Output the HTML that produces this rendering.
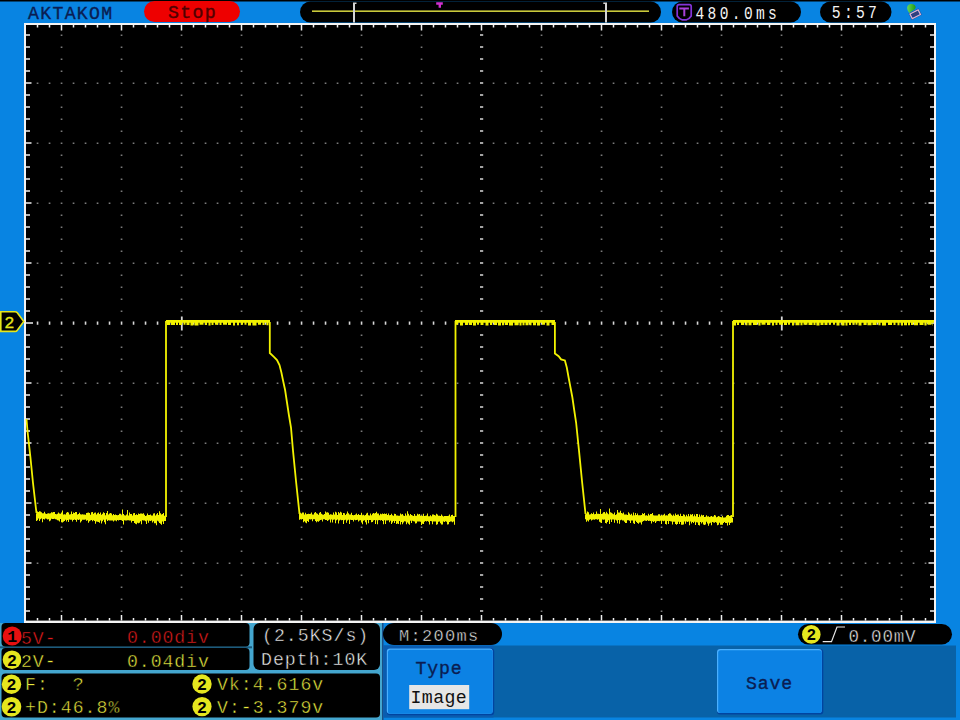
<!DOCTYPE html>
<html><head><meta charset="utf-8"><style>
html,body{margin:0;padding:0;width:960px;height:720px;overflow:hidden;background:#0884e2}
svg{display:block}
text{font-family:"Liberation Mono",monospace}
</style></head><body>
<svg width="960" height="720" viewBox="0 0 960 720">
<rect x="0" y="0" width="960" height="720" fill="#0884e2"/>
<rect x="0" y="0" width="960" height="1.5" fill="#000"/>
<rect x="24" y="23" width="912" height="600.4" fill="#f4f4f4"/>
<rect x="26" y="25" width="908" height="595.6" fill="#000"/>
<path d="M60.70 34.40h1.7v1.6h-1.7zM60.70 46.40h1.7v1.6h-1.7zM60.70 58.40h1.7v1.6h-1.7zM60.70 70.40h1.7v1.6h-1.7zM60.70 82.40h1.7v1.6h-1.7zM60.70 94.40h1.7v1.6h-1.7zM60.70 106.40h1.7v1.6h-1.7zM60.70 118.40h1.7v1.6h-1.7zM60.70 130.40h1.7v1.6h-1.7zM60.70 142.40h1.7v1.6h-1.7zM60.70 154.40h1.7v1.6h-1.7zM60.70 166.40h1.7v1.6h-1.7zM60.70 178.40h1.7v1.6h-1.7zM60.70 190.40h1.7v1.6h-1.7zM60.70 202.40h1.7v1.6h-1.7zM60.70 214.40h1.7v1.6h-1.7zM60.70 226.40h1.7v1.6h-1.7zM60.70 238.40h1.7v1.6h-1.7zM60.70 250.40h1.7v1.6h-1.7zM60.70 262.40h1.7v1.6h-1.7zM60.70 274.40h1.7v1.6h-1.7zM60.70 286.40h1.7v1.6h-1.7zM60.70 298.40h1.7v1.6h-1.7zM60.70 310.40h1.7v1.6h-1.7zM60.70 334.40h1.7v1.6h-1.7zM60.70 346.40h1.7v1.6h-1.7zM60.70 358.40h1.7v1.6h-1.7zM60.70 370.40h1.7v1.6h-1.7zM60.70 382.40h1.7v1.6h-1.7zM60.70 394.40h1.7v1.6h-1.7zM60.70 406.40h1.7v1.6h-1.7zM60.70 418.40h1.7v1.6h-1.7zM60.70 430.40h1.7v1.6h-1.7zM60.70 442.40h1.7v1.6h-1.7zM60.70 454.40h1.7v1.6h-1.7zM60.70 466.40h1.7v1.6h-1.7zM60.70 478.40h1.7v1.6h-1.7zM60.70 490.40h1.7v1.6h-1.7zM60.70 502.40h1.7v1.6h-1.7zM60.70 514.40h1.7v1.6h-1.7zM60.70 526.40h1.7v1.6h-1.7zM60.70 538.40h1.7v1.6h-1.7zM60.70 550.40h1.7v1.6h-1.7zM60.70 562.40h1.7v1.6h-1.7zM60.70 574.40h1.7v1.6h-1.7zM60.70 586.40h1.7v1.6h-1.7zM60.70 598.40h1.7v1.6h-1.7zM60.70 610.40h1.7v1.6h-1.7zM120.70 34.40h1.7v1.6h-1.7zM120.70 46.40h1.7v1.6h-1.7zM120.70 58.40h1.7v1.6h-1.7zM120.70 70.40h1.7v1.6h-1.7zM120.70 82.40h1.7v1.6h-1.7zM120.70 94.40h1.7v1.6h-1.7zM120.70 106.40h1.7v1.6h-1.7zM120.70 118.40h1.7v1.6h-1.7zM120.70 130.40h1.7v1.6h-1.7zM120.70 142.40h1.7v1.6h-1.7zM120.70 154.40h1.7v1.6h-1.7zM120.70 166.40h1.7v1.6h-1.7zM120.70 178.40h1.7v1.6h-1.7zM120.70 190.40h1.7v1.6h-1.7zM120.70 202.40h1.7v1.6h-1.7zM120.70 214.40h1.7v1.6h-1.7zM120.70 226.40h1.7v1.6h-1.7zM120.70 238.40h1.7v1.6h-1.7zM120.70 250.40h1.7v1.6h-1.7zM120.70 262.40h1.7v1.6h-1.7zM120.70 274.40h1.7v1.6h-1.7zM120.70 286.40h1.7v1.6h-1.7zM120.70 298.40h1.7v1.6h-1.7zM120.70 310.40h1.7v1.6h-1.7zM120.70 334.40h1.7v1.6h-1.7zM120.70 346.40h1.7v1.6h-1.7zM120.70 358.40h1.7v1.6h-1.7zM120.70 370.40h1.7v1.6h-1.7zM120.70 382.40h1.7v1.6h-1.7zM120.70 394.40h1.7v1.6h-1.7zM120.70 406.40h1.7v1.6h-1.7zM120.70 418.40h1.7v1.6h-1.7zM120.70 430.40h1.7v1.6h-1.7zM120.70 442.40h1.7v1.6h-1.7zM120.70 454.40h1.7v1.6h-1.7zM120.70 466.40h1.7v1.6h-1.7zM120.70 478.40h1.7v1.6h-1.7zM120.70 490.40h1.7v1.6h-1.7zM120.70 502.40h1.7v1.6h-1.7zM120.70 514.40h1.7v1.6h-1.7zM120.70 526.40h1.7v1.6h-1.7zM120.70 538.40h1.7v1.6h-1.7zM120.70 550.40h1.7v1.6h-1.7zM120.70 562.40h1.7v1.6h-1.7zM120.70 574.40h1.7v1.6h-1.7zM120.70 586.40h1.7v1.6h-1.7zM120.70 598.40h1.7v1.6h-1.7zM120.70 610.40h1.7v1.6h-1.7zM180.70 34.40h1.7v1.6h-1.7zM180.70 46.40h1.7v1.6h-1.7zM180.70 58.40h1.7v1.6h-1.7zM180.70 70.40h1.7v1.6h-1.7zM180.70 82.40h1.7v1.6h-1.7zM180.70 94.40h1.7v1.6h-1.7zM180.70 106.40h1.7v1.6h-1.7zM180.70 118.40h1.7v1.6h-1.7zM180.70 130.40h1.7v1.6h-1.7zM180.70 142.40h1.7v1.6h-1.7zM180.70 154.40h1.7v1.6h-1.7zM180.70 166.40h1.7v1.6h-1.7zM180.70 178.40h1.7v1.6h-1.7zM180.70 190.40h1.7v1.6h-1.7zM180.70 202.40h1.7v1.6h-1.7zM180.70 214.40h1.7v1.6h-1.7zM180.70 226.40h1.7v1.6h-1.7zM180.70 238.40h1.7v1.6h-1.7zM180.70 250.40h1.7v1.6h-1.7zM180.70 262.40h1.7v1.6h-1.7zM180.70 274.40h1.7v1.6h-1.7zM180.70 286.40h1.7v1.6h-1.7zM180.70 298.40h1.7v1.6h-1.7zM180.70 310.40h1.7v1.6h-1.7zM180.70 334.40h1.7v1.6h-1.7zM180.70 346.40h1.7v1.6h-1.7zM180.70 358.40h1.7v1.6h-1.7zM180.70 370.40h1.7v1.6h-1.7zM180.70 382.40h1.7v1.6h-1.7zM180.70 394.40h1.7v1.6h-1.7zM180.70 406.40h1.7v1.6h-1.7zM180.70 418.40h1.7v1.6h-1.7zM180.70 430.40h1.7v1.6h-1.7zM180.70 442.40h1.7v1.6h-1.7zM180.70 454.40h1.7v1.6h-1.7zM180.70 466.40h1.7v1.6h-1.7zM180.70 478.40h1.7v1.6h-1.7zM180.70 490.40h1.7v1.6h-1.7zM180.70 502.40h1.7v1.6h-1.7zM180.70 514.40h1.7v1.6h-1.7zM180.70 526.40h1.7v1.6h-1.7zM180.70 538.40h1.7v1.6h-1.7zM180.70 550.40h1.7v1.6h-1.7zM180.70 562.40h1.7v1.6h-1.7zM180.70 574.40h1.7v1.6h-1.7zM180.70 586.40h1.7v1.6h-1.7zM180.70 598.40h1.7v1.6h-1.7zM180.70 610.40h1.7v1.6h-1.7zM240.70 34.40h1.7v1.6h-1.7zM240.70 46.40h1.7v1.6h-1.7zM240.70 58.40h1.7v1.6h-1.7zM240.70 70.40h1.7v1.6h-1.7zM240.70 82.40h1.7v1.6h-1.7zM240.70 94.40h1.7v1.6h-1.7zM240.70 106.40h1.7v1.6h-1.7zM240.70 118.40h1.7v1.6h-1.7zM240.70 130.40h1.7v1.6h-1.7zM240.70 142.40h1.7v1.6h-1.7zM240.70 154.40h1.7v1.6h-1.7zM240.70 166.40h1.7v1.6h-1.7zM240.70 178.40h1.7v1.6h-1.7zM240.70 190.40h1.7v1.6h-1.7zM240.70 202.40h1.7v1.6h-1.7zM240.70 214.40h1.7v1.6h-1.7zM240.70 226.40h1.7v1.6h-1.7zM240.70 238.40h1.7v1.6h-1.7zM240.70 250.40h1.7v1.6h-1.7zM240.70 262.40h1.7v1.6h-1.7zM240.70 274.40h1.7v1.6h-1.7zM240.70 286.40h1.7v1.6h-1.7zM240.70 298.40h1.7v1.6h-1.7zM240.70 310.40h1.7v1.6h-1.7zM240.70 334.40h1.7v1.6h-1.7zM240.70 346.40h1.7v1.6h-1.7zM240.70 358.40h1.7v1.6h-1.7zM240.70 370.40h1.7v1.6h-1.7zM240.70 382.40h1.7v1.6h-1.7zM240.70 394.40h1.7v1.6h-1.7zM240.70 406.40h1.7v1.6h-1.7zM240.70 418.40h1.7v1.6h-1.7zM240.70 430.40h1.7v1.6h-1.7zM240.70 442.40h1.7v1.6h-1.7zM240.70 454.40h1.7v1.6h-1.7zM240.70 466.40h1.7v1.6h-1.7zM240.70 478.40h1.7v1.6h-1.7zM240.70 490.40h1.7v1.6h-1.7zM240.70 502.40h1.7v1.6h-1.7zM240.70 514.40h1.7v1.6h-1.7zM240.70 526.40h1.7v1.6h-1.7zM240.70 538.40h1.7v1.6h-1.7zM240.70 550.40h1.7v1.6h-1.7zM240.70 562.40h1.7v1.6h-1.7zM240.70 574.40h1.7v1.6h-1.7zM240.70 586.40h1.7v1.6h-1.7zM240.70 598.40h1.7v1.6h-1.7zM240.70 610.40h1.7v1.6h-1.7zM300.70 34.40h1.7v1.6h-1.7zM300.70 46.40h1.7v1.6h-1.7zM300.70 58.40h1.7v1.6h-1.7zM300.70 70.40h1.7v1.6h-1.7zM300.70 82.40h1.7v1.6h-1.7zM300.70 94.40h1.7v1.6h-1.7zM300.70 106.40h1.7v1.6h-1.7zM300.70 118.40h1.7v1.6h-1.7zM300.70 130.40h1.7v1.6h-1.7zM300.70 142.40h1.7v1.6h-1.7zM300.70 154.40h1.7v1.6h-1.7zM300.70 166.40h1.7v1.6h-1.7zM300.70 178.40h1.7v1.6h-1.7zM300.70 190.40h1.7v1.6h-1.7zM300.70 202.40h1.7v1.6h-1.7zM300.70 214.40h1.7v1.6h-1.7zM300.70 226.40h1.7v1.6h-1.7zM300.70 238.40h1.7v1.6h-1.7zM300.70 250.40h1.7v1.6h-1.7zM300.70 262.40h1.7v1.6h-1.7zM300.70 274.40h1.7v1.6h-1.7zM300.70 286.40h1.7v1.6h-1.7zM300.70 298.40h1.7v1.6h-1.7zM300.70 310.40h1.7v1.6h-1.7zM300.70 334.40h1.7v1.6h-1.7zM300.70 346.40h1.7v1.6h-1.7zM300.70 358.40h1.7v1.6h-1.7zM300.70 370.40h1.7v1.6h-1.7zM300.70 382.40h1.7v1.6h-1.7zM300.70 394.40h1.7v1.6h-1.7zM300.70 406.40h1.7v1.6h-1.7zM300.70 418.40h1.7v1.6h-1.7zM300.70 430.40h1.7v1.6h-1.7zM300.70 442.40h1.7v1.6h-1.7zM300.70 454.40h1.7v1.6h-1.7zM300.70 466.40h1.7v1.6h-1.7zM300.70 478.40h1.7v1.6h-1.7zM300.70 490.40h1.7v1.6h-1.7zM300.70 502.40h1.7v1.6h-1.7zM300.70 514.40h1.7v1.6h-1.7zM300.70 526.40h1.7v1.6h-1.7zM300.70 538.40h1.7v1.6h-1.7zM300.70 550.40h1.7v1.6h-1.7zM300.70 562.40h1.7v1.6h-1.7zM300.70 574.40h1.7v1.6h-1.7zM300.70 586.40h1.7v1.6h-1.7zM300.70 598.40h1.7v1.6h-1.7zM300.70 610.40h1.7v1.6h-1.7zM360.70 34.40h1.7v1.6h-1.7zM360.70 46.40h1.7v1.6h-1.7zM360.70 58.40h1.7v1.6h-1.7zM360.70 70.40h1.7v1.6h-1.7zM360.70 82.40h1.7v1.6h-1.7zM360.70 94.40h1.7v1.6h-1.7zM360.70 106.40h1.7v1.6h-1.7zM360.70 118.40h1.7v1.6h-1.7zM360.70 130.40h1.7v1.6h-1.7zM360.70 142.40h1.7v1.6h-1.7zM360.70 154.40h1.7v1.6h-1.7zM360.70 166.40h1.7v1.6h-1.7zM360.70 178.40h1.7v1.6h-1.7zM360.70 190.40h1.7v1.6h-1.7zM360.70 202.40h1.7v1.6h-1.7zM360.70 214.40h1.7v1.6h-1.7zM360.70 226.40h1.7v1.6h-1.7zM360.70 238.40h1.7v1.6h-1.7zM360.70 250.40h1.7v1.6h-1.7zM360.70 262.40h1.7v1.6h-1.7zM360.70 274.40h1.7v1.6h-1.7zM360.70 286.40h1.7v1.6h-1.7zM360.70 298.40h1.7v1.6h-1.7zM360.70 310.40h1.7v1.6h-1.7zM360.70 334.40h1.7v1.6h-1.7zM360.70 346.40h1.7v1.6h-1.7zM360.70 358.40h1.7v1.6h-1.7zM360.70 370.40h1.7v1.6h-1.7zM360.70 382.40h1.7v1.6h-1.7zM360.70 394.40h1.7v1.6h-1.7zM360.70 406.40h1.7v1.6h-1.7zM360.70 418.40h1.7v1.6h-1.7zM360.70 430.40h1.7v1.6h-1.7zM360.70 442.40h1.7v1.6h-1.7zM360.70 454.40h1.7v1.6h-1.7zM360.70 466.40h1.7v1.6h-1.7zM360.70 478.40h1.7v1.6h-1.7zM360.70 490.40h1.7v1.6h-1.7zM360.70 502.40h1.7v1.6h-1.7zM360.70 514.40h1.7v1.6h-1.7zM360.70 526.40h1.7v1.6h-1.7zM360.70 538.40h1.7v1.6h-1.7zM360.70 550.40h1.7v1.6h-1.7zM360.70 562.40h1.7v1.6h-1.7zM360.70 574.40h1.7v1.6h-1.7zM360.70 586.40h1.7v1.6h-1.7zM360.70 598.40h1.7v1.6h-1.7zM360.70 610.40h1.7v1.6h-1.7zM420.70 34.40h1.7v1.6h-1.7zM420.70 46.40h1.7v1.6h-1.7zM420.70 58.40h1.7v1.6h-1.7zM420.70 70.40h1.7v1.6h-1.7zM420.70 82.40h1.7v1.6h-1.7zM420.70 94.40h1.7v1.6h-1.7zM420.70 106.40h1.7v1.6h-1.7zM420.70 118.40h1.7v1.6h-1.7zM420.70 130.40h1.7v1.6h-1.7zM420.70 142.40h1.7v1.6h-1.7zM420.70 154.40h1.7v1.6h-1.7zM420.70 166.40h1.7v1.6h-1.7zM420.70 178.40h1.7v1.6h-1.7zM420.70 190.40h1.7v1.6h-1.7zM420.70 202.40h1.7v1.6h-1.7zM420.70 214.40h1.7v1.6h-1.7zM420.70 226.40h1.7v1.6h-1.7zM420.70 238.40h1.7v1.6h-1.7zM420.70 250.40h1.7v1.6h-1.7zM420.70 262.40h1.7v1.6h-1.7zM420.70 274.40h1.7v1.6h-1.7zM420.70 286.40h1.7v1.6h-1.7zM420.70 298.40h1.7v1.6h-1.7zM420.70 310.40h1.7v1.6h-1.7zM420.70 334.40h1.7v1.6h-1.7zM420.70 346.40h1.7v1.6h-1.7zM420.70 358.40h1.7v1.6h-1.7zM420.70 370.40h1.7v1.6h-1.7zM420.70 382.40h1.7v1.6h-1.7zM420.70 394.40h1.7v1.6h-1.7zM420.70 406.40h1.7v1.6h-1.7zM420.70 418.40h1.7v1.6h-1.7zM420.70 430.40h1.7v1.6h-1.7zM420.70 442.40h1.7v1.6h-1.7zM420.70 454.40h1.7v1.6h-1.7zM420.70 466.40h1.7v1.6h-1.7zM420.70 478.40h1.7v1.6h-1.7zM420.70 490.40h1.7v1.6h-1.7zM420.70 502.40h1.7v1.6h-1.7zM420.70 514.40h1.7v1.6h-1.7zM420.70 526.40h1.7v1.6h-1.7zM420.70 538.40h1.7v1.6h-1.7zM420.70 550.40h1.7v1.6h-1.7zM420.70 562.40h1.7v1.6h-1.7zM420.70 574.40h1.7v1.6h-1.7zM420.70 586.40h1.7v1.6h-1.7zM420.70 598.40h1.7v1.6h-1.7zM420.70 610.40h1.7v1.6h-1.7zM540.70 34.40h1.7v1.6h-1.7zM540.70 46.40h1.7v1.6h-1.7zM540.70 58.40h1.7v1.6h-1.7zM540.70 70.40h1.7v1.6h-1.7zM540.70 82.40h1.7v1.6h-1.7zM540.70 94.40h1.7v1.6h-1.7zM540.70 106.40h1.7v1.6h-1.7zM540.70 118.40h1.7v1.6h-1.7zM540.70 130.40h1.7v1.6h-1.7zM540.70 142.40h1.7v1.6h-1.7zM540.70 154.40h1.7v1.6h-1.7zM540.70 166.40h1.7v1.6h-1.7zM540.70 178.40h1.7v1.6h-1.7zM540.70 190.40h1.7v1.6h-1.7zM540.70 202.40h1.7v1.6h-1.7zM540.70 214.40h1.7v1.6h-1.7zM540.70 226.40h1.7v1.6h-1.7zM540.70 238.40h1.7v1.6h-1.7zM540.70 250.40h1.7v1.6h-1.7zM540.70 262.40h1.7v1.6h-1.7zM540.70 274.40h1.7v1.6h-1.7zM540.70 286.40h1.7v1.6h-1.7zM540.70 298.40h1.7v1.6h-1.7zM540.70 310.40h1.7v1.6h-1.7zM540.70 334.40h1.7v1.6h-1.7zM540.70 346.40h1.7v1.6h-1.7zM540.70 358.40h1.7v1.6h-1.7zM540.70 370.40h1.7v1.6h-1.7zM540.70 382.40h1.7v1.6h-1.7zM540.70 394.40h1.7v1.6h-1.7zM540.70 406.40h1.7v1.6h-1.7zM540.70 418.40h1.7v1.6h-1.7zM540.70 430.40h1.7v1.6h-1.7zM540.70 442.40h1.7v1.6h-1.7zM540.70 454.40h1.7v1.6h-1.7zM540.70 466.40h1.7v1.6h-1.7zM540.70 478.40h1.7v1.6h-1.7zM540.70 490.40h1.7v1.6h-1.7zM540.70 502.40h1.7v1.6h-1.7zM540.70 514.40h1.7v1.6h-1.7zM540.70 526.40h1.7v1.6h-1.7zM540.70 538.40h1.7v1.6h-1.7zM540.70 550.40h1.7v1.6h-1.7zM540.70 562.40h1.7v1.6h-1.7zM540.70 574.40h1.7v1.6h-1.7zM540.70 586.40h1.7v1.6h-1.7zM540.70 598.40h1.7v1.6h-1.7zM540.70 610.40h1.7v1.6h-1.7zM600.70 34.40h1.7v1.6h-1.7zM600.70 46.40h1.7v1.6h-1.7zM600.70 58.40h1.7v1.6h-1.7zM600.70 70.40h1.7v1.6h-1.7zM600.70 82.40h1.7v1.6h-1.7zM600.70 94.40h1.7v1.6h-1.7zM600.70 106.40h1.7v1.6h-1.7zM600.70 118.40h1.7v1.6h-1.7zM600.70 130.40h1.7v1.6h-1.7zM600.70 142.40h1.7v1.6h-1.7zM600.70 154.40h1.7v1.6h-1.7zM600.70 166.40h1.7v1.6h-1.7zM600.70 178.40h1.7v1.6h-1.7zM600.70 190.40h1.7v1.6h-1.7zM600.70 202.40h1.7v1.6h-1.7zM600.70 214.40h1.7v1.6h-1.7zM600.70 226.40h1.7v1.6h-1.7zM600.70 238.40h1.7v1.6h-1.7zM600.70 250.40h1.7v1.6h-1.7zM600.70 262.40h1.7v1.6h-1.7zM600.70 274.40h1.7v1.6h-1.7zM600.70 286.40h1.7v1.6h-1.7zM600.70 298.40h1.7v1.6h-1.7zM600.70 310.40h1.7v1.6h-1.7zM600.70 334.40h1.7v1.6h-1.7zM600.70 346.40h1.7v1.6h-1.7zM600.70 358.40h1.7v1.6h-1.7zM600.70 370.40h1.7v1.6h-1.7zM600.70 382.40h1.7v1.6h-1.7zM600.70 394.40h1.7v1.6h-1.7zM600.70 406.40h1.7v1.6h-1.7zM600.70 418.40h1.7v1.6h-1.7zM600.70 430.40h1.7v1.6h-1.7zM600.70 442.40h1.7v1.6h-1.7zM600.70 454.40h1.7v1.6h-1.7zM600.70 466.40h1.7v1.6h-1.7zM600.70 478.40h1.7v1.6h-1.7zM600.70 490.40h1.7v1.6h-1.7zM600.70 502.40h1.7v1.6h-1.7zM600.70 514.40h1.7v1.6h-1.7zM600.70 526.40h1.7v1.6h-1.7zM600.70 538.40h1.7v1.6h-1.7zM600.70 550.40h1.7v1.6h-1.7zM600.70 562.40h1.7v1.6h-1.7zM600.70 574.40h1.7v1.6h-1.7zM600.70 586.40h1.7v1.6h-1.7zM600.70 598.40h1.7v1.6h-1.7zM600.70 610.40h1.7v1.6h-1.7zM660.70 34.40h1.7v1.6h-1.7zM660.70 46.40h1.7v1.6h-1.7zM660.70 58.40h1.7v1.6h-1.7zM660.70 70.40h1.7v1.6h-1.7zM660.70 82.40h1.7v1.6h-1.7zM660.70 94.40h1.7v1.6h-1.7zM660.70 106.40h1.7v1.6h-1.7zM660.70 118.40h1.7v1.6h-1.7zM660.70 130.40h1.7v1.6h-1.7zM660.70 142.40h1.7v1.6h-1.7zM660.70 154.40h1.7v1.6h-1.7zM660.70 166.40h1.7v1.6h-1.7zM660.70 178.40h1.7v1.6h-1.7zM660.70 190.40h1.7v1.6h-1.7zM660.70 202.40h1.7v1.6h-1.7zM660.70 214.40h1.7v1.6h-1.7zM660.70 226.40h1.7v1.6h-1.7zM660.70 238.40h1.7v1.6h-1.7zM660.70 250.40h1.7v1.6h-1.7zM660.70 262.40h1.7v1.6h-1.7zM660.70 274.40h1.7v1.6h-1.7zM660.70 286.40h1.7v1.6h-1.7zM660.70 298.40h1.7v1.6h-1.7zM660.70 310.40h1.7v1.6h-1.7zM660.70 334.40h1.7v1.6h-1.7zM660.70 346.40h1.7v1.6h-1.7zM660.70 358.40h1.7v1.6h-1.7zM660.70 370.40h1.7v1.6h-1.7zM660.70 382.40h1.7v1.6h-1.7zM660.70 394.40h1.7v1.6h-1.7zM660.70 406.40h1.7v1.6h-1.7zM660.70 418.40h1.7v1.6h-1.7zM660.70 430.40h1.7v1.6h-1.7zM660.70 442.40h1.7v1.6h-1.7zM660.70 454.40h1.7v1.6h-1.7zM660.70 466.40h1.7v1.6h-1.7zM660.70 478.40h1.7v1.6h-1.7zM660.70 490.40h1.7v1.6h-1.7zM660.70 502.40h1.7v1.6h-1.7zM660.70 514.40h1.7v1.6h-1.7zM660.70 526.40h1.7v1.6h-1.7zM660.70 538.40h1.7v1.6h-1.7zM660.70 550.40h1.7v1.6h-1.7zM660.70 562.40h1.7v1.6h-1.7zM660.70 574.40h1.7v1.6h-1.7zM660.70 586.40h1.7v1.6h-1.7zM660.70 598.40h1.7v1.6h-1.7zM660.70 610.40h1.7v1.6h-1.7zM720.70 34.40h1.7v1.6h-1.7zM720.70 46.40h1.7v1.6h-1.7zM720.70 58.40h1.7v1.6h-1.7zM720.70 70.40h1.7v1.6h-1.7zM720.70 82.40h1.7v1.6h-1.7zM720.70 94.40h1.7v1.6h-1.7zM720.70 106.40h1.7v1.6h-1.7zM720.70 118.40h1.7v1.6h-1.7zM720.70 130.40h1.7v1.6h-1.7zM720.70 142.40h1.7v1.6h-1.7zM720.70 154.40h1.7v1.6h-1.7zM720.70 166.40h1.7v1.6h-1.7zM720.70 178.40h1.7v1.6h-1.7zM720.70 190.40h1.7v1.6h-1.7zM720.70 202.40h1.7v1.6h-1.7zM720.70 214.40h1.7v1.6h-1.7zM720.70 226.40h1.7v1.6h-1.7zM720.70 238.40h1.7v1.6h-1.7zM720.70 250.40h1.7v1.6h-1.7zM720.70 262.40h1.7v1.6h-1.7zM720.70 274.40h1.7v1.6h-1.7zM720.70 286.40h1.7v1.6h-1.7zM720.70 298.40h1.7v1.6h-1.7zM720.70 310.40h1.7v1.6h-1.7zM720.70 334.40h1.7v1.6h-1.7zM720.70 346.40h1.7v1.6h-1.7zM720.70 358.40h1.7v1.6h-1.7zM720.70 370.40h1.7v1.6h-1.7zM720.70 382.40h1.7v1.6h-1.7zM720.70 394.40h1.7v1.6h-1.7zM720.70 406.40h1.7v1.6h-1.7zM720.70 418.40h1.7v1.6h-1.7zM720.70 430.40h1.7v1.6h-1.7zM720.70 442.40h1.7v1.6h-1.7zM720.70 454.40h1.7v1.6h-1.7zM720.70 466.40h1.7v1.6h-1.7zM720.70 478.40h1.7v1.6h-1.7zM720.70 490.40h1.7v1.6h-1.7zM720.70 502.40h1.7v1.6h-1.7zM720.70 514.40h1.7v1.6h-1.7zM720.70 526.40h1.7v1.6h-1.7zM720.70 538.40h1.7v1.6h-1.7zM720.70 550.40h1.7v1.6h-1.7zM720.70 562.40h1.7v1.6h-1.7zM720.70 574.40h1.7v1.6h-1.7zM720.70 586.40h1.7v1.6h-1.7zM720.70 598.40h1.7v1.6h-1.7zM720.70 610.40h1.7v1.6h-1.7zM780.70 34.40h1.7v1.6h-1.7zM780.70 46.40h1.7v1.6h-1.7zM780.70 58.40h1.7v1.6h-1.7zM780.70 70.40h1.7v1.6h-1.7zM780.70 82.40h1.7v1.6h-1.7zM780.70 94.40h1.7v1.6h-1.7zM780.70 106.40h1.7v1.6h-1.7zM780.70 118.40h1.7v1.6h-1.7zM780.70 130.40h1.7v1.6h-1.7zM780.70 142.40h1.7v1.6h-1.7zM780.70 154.40h1.7v1.6h-1.7zM780.70 166.40h1.7v1.6h-1.7zM780.70 178.40h1.7v1.6h-1.7zM780.70 190.40h1.7v1.6h-1.7zM780.70 202.40h1.7v1.6h-1.7zM780.70 214.40h1.7v1.6h-1.7zM780.70 226.40h1.7v1.6h-1.7zM780.70 238.40h1.7v1.6h-1.7zM780.70 250.40h1.7v1.6h-1.7zM780.70 262.40h1.7v1.6h-1.7zM780.70 274.40h1.7v1.6h-1.7zM780.70 286.40h1.7v1.6h-1.7zM780.70 298.40h1.7v1.6h-1.7zM780.70 310.40h1.7v1.6h-1.7zM780.70 334.40h1.7v1.6h-1.7zM780.70 346.40h1.7v1.6h-1.7zM780.70 358.40h1.7v1.6h-1.7zM780.70 370.40h1.7v1.6h-1.7zM780.70 382.40h1.7v1.6h-1.7zM780.70 394.40h1.7v1.6h-1.7zM780.70 406.40h1.7v1.6h-1.7zM780.70 418.40h1.7v1.6h-1.7zM780.70 430.40h1.7v1.6h-1.7zM780.70 442.40h1.7v1.6h-1.7zM780.70 454.40h1.7v1.6h-1.7zM780.70 466.40h1.7v1.6h-1.7zM780.70 478.40h1.7v1.6h-1.7zM780.70 490.40h1.7v1.6h-1.7zM780.70 502.40h1.7v1.6h-1.7zM780.70 514.40h1.7v1.6h-1.7zM780.70 526.40h1.7v1.6h-1.7zM780.70 538.40h1.7v1.6h-1.7zM780.70 550.40h1.7v1.6h-1.7zM780.70 562.40h1.7v1.6h-1.7zM780.70 574.40h1.7v1.6h-1.7zM780.70 586.40h1.7v1.6h-1.7zM780.70 598.40h1.7v1.6h-1.7zM780.70 610.40h1.7v1.6h-1.7zM840.70 34.40h1.7v1.6h-1.7zM840.70 46.40h1.7v1.6h-1.7zM840.70 58.40h1.7v1.6h-1.7zM840.70 70.40h1.7v1.6h-1.7zM840.70 82.40h1.7v1.6h-1.7zM840.70 94.40h1.7v1.6h-1.7zM840.70 106.40h1.7v1.6h-1.7zM840.70 118.40h1.7v1.6h-1.7zM840.70 130.40h1.7v1.6h-1.7zM840.70 142.40h1.7v1.6h-1.7zM840.70 154.40h1.7v1.6h-1.7zM840.70 166.40h1.7v1.6h-1.7zM840.70 178.40h1.7v1.6h-1.7zM840.70 190.40h1.7v1.6h-1.7zM840.70 202.40h1.7v1.6h-1.7zM840.70 214.40h1.7v1.6h-1.7zM840.70 226.40h1.7v1.6h-1.7zM840.70 238.40h1.7v1.6h-1.7zM840.70 250.40h1.7v1.6h-1.7zM840.70 262.40h1.7v1.6h-1.7zM840.70 274.40h1.7v1.6h-1.7zM840.70 286.40h1.7v1.6h-1.7zM840.70 298.40h1.7v1.6h-1.7zM840.70 310.40h1.7v1.6h-1.7zM840.70 334.40h1.7v1.6h-1.7zM840.70 346.40h1.7v1.6h-1.7zM840.70 358.40h1.7v1.6h-1.7zM840.70 370.40h1.7v1.6h-1.7zM840.70 382.40h1.7v1.6h-1.7zM840.70 394.40h1.7v1.6h-1.7zM840.70 406.40h1.7v1.6h-1.7zM840.70 418.40h1.7v1.6h-1.7zM840.70 430.40h1.7v1.6h-1.7zM840.70 442.40h1.7v1.6h-1.7zM840.70 454.40h1.7v1.6h-1.7zM840.70 466.40h1.7v1.6h-1.7zM840.70 478.40h1.7v1.6h-1.7zM840.70 490.40h1.7v1.6h-1.7zM840.70 502.40h1.7v1.6h-1.7zM840.70 514.40h1.7v1.6h-1.7zM840.70 526.40h1.7v1.6h-1.7zM840.70 538.40h1.7v1.6h-1.7zM840.70 550.40h1.7v1.6h-1.7zM840.70 562.40h1.7v1.6h-1.7zM840.70 574.40h1.7v1.6h-1.7zM840.70 586.40h1.7v1.6h-1.7zM840.70 598.40h1.7v1.6h-1.7zM840.70 610.40h1.7v1.6h-1.7zM900.70 34.40h1.7v1.6h-1.7zM900.70 46.40h1.7v1.6h-1.7zM900.70 58.40h1.7v1.6h-1.7zM900.70 70.40h1.7v1.6h-1.7zM900.70 82.40h1.7v1.6h-1.7zM900.70 94.40h1.7v1.6h-1.7zM900.70 106.40h1.7v1.6h-1.7zM900.70 118.40h1.7v1.6h-1.7zM900.70 130.40h1.7v1.6h-1.7zM900.70 142.40h1.7v1.6h-1.7zM900.70 154.40h1.7v1.6h-1.7zM900.70 166.40h1.7v1.6h-1.7zM900.70 178.40h1.7v1.6h-1.7zM900.70 190.40h1.7v1.6h-1.7zM900.70 202.40h1.7v1.6h-1.7zM900.70 214.40h1.7v1.6h-1.7zM900.70 226.40h1.7v1.6h-1.7zM900.70 238.40h1.7v1.6h-1.7zM900.70 250.40h1.7v1.6h-1.7zM900.70 262.40h1.7v1.6h-1.7zM900.70 274.40h1.7v1.6h-1.7zM900.70 286.40h1.7v1.6h-1.7zM900.70 298.40h1.7v1.6h-1.7zM900.70 310.40h1.7v1.6h-1.7zM900.70 334.40h1.7v1.6h-1.7zM900.70 346.40h1.7v1.6h-1.7zM900.70 358.40h1.7v1.6h-1.7zM900.70 370.40h1.7v1.6h-1.7zM900.70 382.40h1.7v1.6h-1.7zM900.70 394.40h1.7v1.6h-1.7zM900.70 406.40h1.7v1.6h-1.7zM900.70 418.40h1.7v1.6h-1.7zM900.70 430.40h1.7v1.6h-1.7zM900.70 442.40h1.7v1.6h-1.7zM900.70 454.40h1.7v1.6h-1.7zM900.70 466.40h1.7v1.6h-1.7zM900.70 478.40h1.7v1.6h-1.7zM900.70 490.40h1.7v1.6h-1.7zM900.70 502.40h1.7v1.6h-1.7zM900.70 514.40h1.7v1.6h-1.7zM900.70 526.40h1.7v1.6h-1.7zM900.70 538.40h1.7v1.6h-1.7zM900.70 550.40h1.7v1.6h-1.7zM900.70 562.40h1.7v1.6h-1.7zM900.70 574.40h1.7v1.6h-1.7zM900.70 586.40h1.7v1.6h-1.7zM900.70 598.40h1.7v1.6h-1.7zM900.70 610.40h1.7v1.6h-1.7zM36.70 82.40h1.7v1.6h-1.7zM48.70 82.40h1.7v1.6h-1.7zM72.70 82.40h1.7v1.6h-1.7zM84.70 82.40h1.7v1.6h-1.7zM96.70 82.40h1.7v1.6h-1.7zM108.70 82.40h1.7v1.6h-1.7zM132.70 82.40h1.7v1.6h-1.7zM144.70 82.40h1.7v1.6h-1.7zM156.70 82.40h1.7v1.6h-1.7zM168.70 82.40h1.7v1.6h-1.7zM192.70 82.40h1.7v1.6h-1.7zM204.70 82.40h1.7v1.6h-1.7zM216.70 82.40h1.7v1.6h-1.7zM228.70 82.40h1.7v1.6h-1.7zM252.70 82.40h1.7v1.6h-1.7zM264.70 82.40h1.7v1.6h-1.7zM276.70 82.40h1.7v1.6h-1.7zM288.70 82.40h1.7v1.6h-1.7zM312.70 82.40h1.7v1.6h-1.7zM324.70 82.40h1.7v1.6h-1.7zM336.70 82.40h1.7v1.6h-1.7zM348.70 82.40h1.7v1.6h-1.7zM372.70 82.40h1.7v1.6h-1.7zM384.70 82.40h1.7v1.6h-1.7zM396.70 82.40h1.7v1.6h-1.7zM408.70 82.40h1.7v1.6h-1.7zM432.70 82.40h1.7v1.6h-1.7zM444.70 82.40h1.7v1.6h-1.7zM456.70 82.40h1.7v1.6h-1.7zM468.70 82.40h1.7v1.6h-1.7zM492.70 82.40h1.7v1.6h-1.7zM504.70 82.40h1.7v1.6h-1.7zM516.70 82.40h1.7v1.6h-1.7zM528.70 82.40h1.7v1.6h-1.7zM552.70 82.40h1.7v1.6h-1.7zM564.70 82.40h1.7v1.6h-1.7zM576.70 82.40h1.7v1.6h-1.7zM588.70 82.40h1.7v1.6h-1.7zM612.70 82.40h1.7v1.6h-1.7zM624.70 82.40h1.7v1.6h-1.7zM636.70 82.40h1.7v1.6h-1.7zM648.70 82.40h1.7v1.6h-1.7zM672.70 82.40h1.7v1.6h-1.7zM684.70 82.40h1.7v1.6h-1.7zM696.70 82.40h1.7v1.6h-1.7zM708.70 82.40h1.7v1.6h-1.7zM732.70 82.40h1.7v1.6h-1.7zM744.70 82.40h1.7v1.6h-1.7zM756.70 82.40h1.7v1.6h-1.7zM768.70 82.40h1.7v1.6h-1.7zM792.70 82.40h1.7v1.6h-1.7zM804.70 82.40h1.7v1.6h-1.7zM816.70 82.40h1.7v1.6h-1.7zM828.70 82.40h1.7v1.6h-1.7zM852.70 82.40h1.7v1.6h-1.7zM864.70 82.40h1.7v1.6h-1.7zM876.70 82.40h1.7v1.6h-1.7zM888.70 82.40h1.7v1.6h-1.7zM912.70 82.40h1.7v1.6h-1.7zM924.70 82.40h1.7v1.6h-1.7zM36.70 142.40h1.7v1.6h-1.7zM48.70 142.40h1.7v1.6h-1.7zM72.70 142.40h1.7v1.6h-1.7zM84.70 142.40h1.7v1.6h-1.7zM96.70 142.40h1.7v1.6h-1.7zM108.70 142.40h1.7v1.6h-1.7zM132.70 142.40h1.7v1.6h-1.7zM144.70 142.40h1.7v1.6h-1.7zM156.70 142.40h1.7v1.6h-1.7zM168.70 142.40h1.7v1.6h-1.7zM192.70 142.40h1.7v1.6h-1.7zM204.70 142.40h1.7v1.6h-1.7zM216.70 142.40h1.7v1.6h-1.7zM228.70 142.40h1.7v1.6h-1.7zM252.70 142.40h1.7v1.6h-1.7zM264.70 142.40h1.7v1.6h-1.7zM276.70 142.40h1.7v1.6h-1.7zM288.70 142.40h1.7v1.6h-1.7zM312.70 142.40h1.7v1.6h-1.7zM324.70 142.40h1.7v1.6h-1.7zM336.70 142.40h1.7v1.6h-1.7zM348.70 142.40h1.7v1.6h-1.7zM372.70 142.40h1.7v1.6h-1.7zM384.70 142.40h1.7v1.6h-1.7zM396.70 142.40h1.7v1.6h-1.7zM408.70 142.40h1.7v1.6h-1.7zM432.70 142.40h1.7v1.6h-1.7zM444.70 142.40h1.7v1.6h-1.7zM456.70 142.40h1.7v1.6h-1.7zM468.70 142.40h1.7v1.6h-1.7zM492.70 142.40h1.7v1.6h-1.7zM504.70 142.40h1.7v1.6h-1.7zM516.70 142.40h1.7v1.6h-1.7zM528.70 142.40h1.7v1.6h-1.7zM552.70 142.40h1.7v1.6h-1.7zM564.70 142.40h1.7v1.6h-1.7zM576.70 142.40h1.7v1.6h-1.7zM588.70 142.40h1.7v1.6h-1.7zM612.70 142.40h1.7v1.6h-1.7zM624.70 142.40h1.7v1.6h-1.7zM636.70 142.40h1.7v1.6h-1.7zM648.70 142.40h1.7v1.6h-1.7zM672.70 142.40h1.7v1.6h-1.7zM684.70 142.40h1.7v1.6h-1.7zM696.70 142.40h1.7v1.6h-1.7zM708.70 142.40h1.7v1.6h-1.7zM732.70 142.40h1.7v1.6h-1.7zM744.70 142.40h1.7v1.6h-1.7zM756.70 142.40h1.7v1.6h-1.7zM768.70 142.40h1.7v1.6h-1.7zM792.70 142.40h1.7v1.6h-1.7zM804.70 142.40h1.7v1.6h-1.7zM816.70 142.40h1.7v1.6h-1.7zM828.70 142.40h1.7v1.6h-1.7zM852.70 142.40h1.7v1.6h-1.7zM864.70 142.40h1.7v1.6h-1.7zM876.70 142.40h1.7v1.6h-1.7zM888.70 142.40h1.7v1.6h-1.7zM912.70 142.40h1.7v1.6h-1.7zM924.70 142.40h1.7v1.6h-1.7zM36.70 202.40h1.7v1.6h-1.7zM48.70 202.40h1.7v1.6h-1.7zM72.70 202.40h1.7v1.6h-1.7zM84.70 202.40h1.7v1.6h-1.7zM96.70 202.40h1.7v1.6h-1.7zM108.70 202.40h1.7v1.6h-1.7zM132.70 202.40h1.7v1.6h-1.7zM144.70 202.40h1.7v1.6h-1.7zM156.70 202.40h1.7v1.6h-1.7zM168.70 202.40h1.7v1.6h-1.7zM192.70 202.40h1.7v1.6h-1.7zM204.70 202.40h1.7v1.6h-1.7zM216.70 202.40h1.7v1.6h-1.7zM228.70 202.40h1.7v1.6h-1.7zM252.70 202.40h1.7v1.6h-1.7zM264.70 202.40h1.7v1.6h-1.7zM276.70 202.40h1.7v1.6h-1.7zM288.70 202.40h1.7v1.6h-1.7zM312.70 202.40h1.7v1.6h-1.7zM324.70 202.40h1.7v1.6h-1.7zM336.70 202.40h1.7v1.6h-1.7zM348.70 202.40h1.7v1.6h-1.7zM372.70 202.40h1.7v1.6h-1.7zM384.70 202.40h1.7v1.6h-1.7zM396.70 202.40h1.7v1.6h-1.7zM408.70 202.40h1.7v1.6h-1.7zM432.70 202.40h1.7v1.6h-1.7zM444.70 202.40h1.7v1.6h-1.7zM456.70 202.40h1.7v1.6h-1.7zM468.70 202.40h1.7v1.6h-1.7zM492.70 202.40h1.7v1.6h-1.7zM504.70 202.40h1.7v1.6h-1.7zM516.70 202.40h1.7v1.6h-1.7zM528.70 202.40h1.7v1.6h-1.7zM552.70 202.40h1.7v1.6h-1.7zM564.70 202.40h1.7v1.6h-1.7zM576.70 202.40h1.7v1.6h-1.7zM588.70 202.40h1.7v1.6h-1.7zM612.70 202.40h1.7v1.6h-1.7zM624.70 202.40h1.7v1.6h-1.7zM636.70 202.40h1.7v1.6h-1.7zM648.70 202.40h1.7v1.6h-1.7zM672.70 202.40h1.7v1.6h-1.7zM684.70 202.40h1.7v1.6h-1.7zM696.70 202.40h1.7v1.6h-1.7zM708.70 202.40h1.7v1.6h-1.7zM732.70 202.40h1.7v1.6h-1.7zM744.70 202.40h1.7v1.6h-1.7zM756.70 202.40h1.7v1.6h-1.7zM768.70 202.40h1.7v1.6h-1.7zM792.70 202.40h1.7v1.6h-1.7zM804.70 202.40h1.7v1.6h-1.7zM816.70 202.40h1.7v1.6h-1.7zM828.70 202.40h1.7v1.6h-1.7zM852.70 202.40h1.7v1.6h-1.7zM864.70 202.40h1.7v1.6h-1.7zM876.70 202.40h1.7v1.6h-1.7zM888.70 202.40h1.7v1.6h-1.7zM912.70 202.40h1.7v1.6h-1.7zM924.70 202.40h1.7v1.6h-1.7zM36.70 262.40h1.7v1.6h-1.7zM48.70 262.40h1.7v1.6h-1.7zM72.70 262.40h1.7v1.6h-1.7zM84.70 262.40h1.7v1.6h-1.7zM96.70 262.40h1.7v1.6h-1.7zM108.70 262.40h1.7v1.6h-1.7zM132.70 262.40h1.7v1.6h-1.7zM144.70 262.40h1.7v1.6h-1.7zM156.70 262.40h1.7v1.6h-1.7zM168.70 262.40h1.7v1.6h-1.7zM192.70 262.40h1.7v1.6h-1.7zM204.70 262.40h1.7v1.6h-1.7zM216.70 262.40h1.7v1.6h-1.7zM228.70 262.40h1.7v1.6h-1.7zM252.70 262.40h1.7v1.6h-1.7zM264.70 262.40h1.7v1.6h-1.7zM276.70 262.40h1.7v1.6h-1.7zM288.70 262.40h1.7v1.6h-1.7zM312.70 262.40h1.7v1.6h-1.7zM324.70 262.40h1.7v1.6h-1.7zM336.70 262.40h1.7v1.6h-1.7zM348.70 262.40h1.7v1.6h-1.7zM372.70 262.40h1.7v1.6h-1.7zM384.70 262.40h1.7v1.6h-1.7zM396.70 262.40h1.7v1.6h-1.7zM408.70 262.40h1.7v1.6h-1.7zM432.70 262.40h1.7v1.6h-1.7zM444.70 262.40h1.7v1.6h-1.7zM456.70 262.40h1.7v1.6h-1.7zM468.70 262.40h1.7v1.6h-1.7zM492.70 262.40h1.7v1.6h-1.7zM504.70 262.40h1.7v1.6h-1.7zM516.70 262.40h1.7v1.6h-1.7zM528.70 262.40h1.7v1.6h-1.7zM552.70 262.40h1.7v1.6h-1.7zM564.70 262.40h1.7v1.6h-1.7zM576.70 262.40h1.7v1.6h-1.7zM588.70 262.40h1.7v1.6h-1.7zM612.70 262.40h1.7v1.6h-1.7zM624.70 262.40h1.7v1.6h-1.7zM636.70 262.40h1.7v1.6h-1.7zM648.70 262.40h1.7v1.6h-1.7zM672.70 262.40h1.7v1.6h-1.7zM684.70 262.40h1.7v1.6h-1.7zM696.70 262.40h1.7v1.6h-1.7zM708.70 262.40h1.7v1.6h-1.7zM732.70 262.40h1.7v1.6h-1.7zM744.70 262.40h1.7v1.6h-1.7zM756.70 262.40h1.7v1.6h-1.7zM768.70 262.40h1.7v1.6h-1.7zM792.70 262.40h1.7v1.6h-1.7zM804.70 262.40h1.7v1.6h-1.7zM816.70 262.40h1.7v1.6h-1.7zM828.70 262.40h1.7v1.6h-1.7zM852.70 262.40h1.7v1.6h-1.7zM864.70 262.40h1.7v1.6h-1.7zM876.70 262.40h1.7v1.6h-1.7zM888.70 262.40h1.7v1.6h-1.7zM912.70 262.40h1.7v1.6h-1.7zM924.70 262.40h1.7v1.6h-1.7zM36.70 382.40h1.7v1.6h-1.7zM48.70 382.40h1.7v1.6h-1.7zM72.70 382.40h1.7v1.6h-1.7zM84.70 382.40h1.7v1.6h-1.7zM96.70 382.40h1.7v1.6h-1.7zM108.70 382.40h1.7v1.6h-1.7zM132.70 382.40h1.7v1.6h-1.7zM144.70 382.40h1.7v1.6h-1.7zM156.70 382.40h1.7v1.6h-1.7zM168.70 382.40h1.7v1.6h-1.7zM192.70 382.40h1.7v1.6h-1.7zM204.70 382.40h1.7v1.6h-1.7zM216.70 382.40h1.7v1.6h-1.7zM228.70 382.40h1.7v1.6h-1.7zM252.70 382.40h1.7v1.6h-1.7zM264.70 382.40h1.7v1.6h-1.7zM276.70 382.40h1.7v1.6h-1.7zM288.70 382.40h1.7v1.6h-1.7zM312.70 382.40h1.7v1.6h-1.7zM324.70 382.40h1.7v1.6h-1.7zM336.70 382.40h1.7v1.6h-1.7zM348.70 382.40h1.7v1.6h-1.7zM372.70 382.40h1.7v1.6h-1.7zM384.70 382.40h1.7v1.6h-1.7zM396.70 382.40h1.7v1.6h-1.7zM408.70 382.40h1.7v1.6h-1.7zM432.70 382.40h1.7v1.6h-1.7zM444.70 382.40h1.7v1.6h-1.7zM456.70 382.40h1.7v1.6h-1.7zM468.70 382.40h1.7v1.6h-1.7zM492.70 382.40h1.7v1.6h-1.7zM504.70 382.40h1.7v1.6h-1.7zM516.70 382.40h1.7v1.6h-1.7zM528.70 382.40h1.7v1.6h-1.7zM552.70 382.40h1.7v1.6h-1.7zM564.70 382.40h1.7v1.6h-1.7zM576.70 382.40h1.7v1.6h-1.7zM588.70 382.40h1.7v1.6h-1.7zM612.70 382.40h1.7v1.6h-1.7zM624.70 382.40h1.7v1.6h-1.7zM636.70 382.40h1.7v1.6h-1.7zM648.70 382.40h1.7v1.6h-1.7zM672.70 382.40h1.7v1.6h-1.7zM684.70 382.40h1.7v1.6h-1.7zM696.70 382.40h1.7v1.6h-1.7zM708.70 382.40h1.7v1.6h-1.7zM732.70 382.40h1.7v1.6h-1.7zM744.70 382.40h1.7v1.6h-1.7zM756.70 382.40h1.7v1.6h-1.7zM768.70 382.40h1.7v1.6h-1.7zM792.70 382.40h1.7v1.6h-1.7zM804.70 382.40h1.7v1.6h-1.7zM816.70 382.40h1.7v1.6h-1.7zM828.70 382.40h1.7v1.6h-1.7zM852.70 382.40h1.7v1.6h-1.7zM864.70 382.40h1.7v1.6h-1.7zM876.70 382.40h1.7v1.6h-1.7zM888.70 382.40h1.7v1.6h-1.7zM912.70 382.40h1.7v1.6h-1.7zM924.70 382.40h1.7v1.6h-1.7zM36.70 442.40h1.7v1.6h-1.7zM48.70 442.40h1.7v1.6h-1.7zM72.70 442.40h1.7v1.6h-1.7zM84.70 442.40h1.7v1.6h-1.7zM96.70 442.40h1.7v1.6h-1.7zM108.70 442.40h1.7v1.6h-1.7zM132.70 442.40h1.7v1.6h-1.7zM144.70 442.40h1.7v1.6h-1.7zM156.70 442.40h1.7v1.6h-1.7zM168.70 442.40h1.7v1.6h-1.7zM192.70 442.40h1.7v1.6h-1.7zM204.70 442.40h1.7v1.6h-1.7zM216.70 442.40h1.7v1.6h-1.7zM228.70 442.40h1.7v1.6h-1.7zM252.70 442.40h1.7v1.6h-1.7zM264.70 442.40h1.7v1.6h-1.7zM276.70 442.40h1.7v1.6h-1.7zM288.70 442.40h1.7v1.6h-1.7zM312.70 442.40h1.7v1.6h-1.7zM324.70 442.40h1.7v1.6h-1.7zM336.70 442.40h1.7v1.6h-1.7zM348.70 442.40h1.7v1.6h-1.7zM372.70 442.40h1.7v1.6h-1.7zM384.70 442.40h1.7v1.6h-1.7zM396.70 442.40h1.7v1.6h-1.7zM408.70 442.40h1.7v1.6h-1.7zM432.70 442.40h1.7v1.6h-1.7zM444.70 442.40h1.7v1.6h-1.7zM456.70 442.40h1.7v1.6h-1.7zM468.70 442.40h1.7v1.6h-1.7zM492.70 442.40h1.7v1.6h-1.7zM504.70 442.40h1.7v1.6h-1.7zM516.70 442.40h1.7v1.6h-1.7zM528.70 442.40h1.7v1.6h-1.7zM552.70 442.40h1.7v1.6h-1.7zM564.70 442.40h1.7v1.6h-1.7zM576.70 442.40h1.7v1.6h-1.7zM588.70 442.40h1.7v1.6h-1.7zM612.70 442.40h1.7v1.6h-1.7zM624.70 442.40h1.7v1.6h-1.7zM636.70 442.40h1.7v1.6h-1.7zM648.70 442.40h1.7v1.6h-1.7zM672.70 442.40h1.7v1.6h-1.7zM684.70 442.40h1.7v1.6h-1.7zM696.70 442.40h1.7v1.6h-1.7zM708.70 442.40h1.7v1.6h-1.7zM732.70 442.40h1.7v1.6h-1.7zM744.70 442.40h1.7v1.6h-1.7zM756.70 442.40h1.7v1.6h-1.7zM768.70 442.40h1.7v1.6h-1.7zM792.70 442.40h1.7v1.6h-1.7zM804.70 442.40h1.7v1.6h-1.7zM816.70 442.40h1.7v1.6h-1.7zM828.70 442.40h1.7v1.6h-1.7zM852.70 442.40h1.7v1.6h-1.7zM864.70 442.40h1.7v1.6h-1.7zM876.70 442.40h1.7v1.6h-1.7zM888.70 442.40h1.7v1.6h-1.7zM912.70 442.40h1.7v1.6h-1.7zM924.70 442.40h1.7v1.6h-1.7zM36.70 502.40h1.7v1.6h-1.7zM48.70 502.40h1.7v1.6h-1.7zM72.70 502.40h1.7v1.6h-1.7zM84.70 502.40h1.7v1.6h-1.7zM96.70 502.40h1.7v1.6h-1.7zM108.70 502.40h1.7v1.6h-1.7zM132.70 502.40h1.7v1.6h-1.7zM144.70 502.40h1.7v1.6h-1.7zM156.70 502.40h1.7v1.6h-1.7zM168.70 502.40h1.7v1.6h-1.7zM192.70 502.40h1.7v1.6h-1.7zM204.70 502.40h1.7v1.6h-1.7zM216.70 502.40h1.7v1.6h-1.7zM228.70 502.40h1.7v1.6h-1.7zM252.70 502.40h1.7v1.6h-1.7zM264.70 502.40h1.7v1.6h-1.7zM276.70 502.40h1.7v1.6h-1.7zM288.70 502.40h1.7v1.6h-1.7zM312.70 502.40h1.7v1.6h-1.7zM324.70 502.40h1.7v1.6h-1.7zM336.70 502.40h1.7v1.6h-1.7zM348.70 502.40h1.7v1.6h-1.7zM372.70 502.40h1.7v1.6h-1.7zM384.70 502.40h1.7v1.6h-1.7zM396.70 502.40h1.7v1.6h-1.7zM408.70 502.40h1.7v1.6h-1.7zM432.70 502.40h1.7v1.6h-1.7zM444.70 502.40h1.7v1.6h-1.7zM456.70 502.40h1.7v1.6h-1.7zM468.70 502.40h1.7v1.6h-1.7zM492.70 502.40h1.7v1.6h-1.7zM504.70 502.40h1.7v1.6h-1.7zM516.70 502.40h1.7v1.6h-1.7zM528.70 502.40h1.7v1.6h-1.7zM552.70 502.40h1.7v1.6h-1.7zM564.70 502.40h1.7v1.6h-1.7zM576.70 502.40h1.7v1.6h-1.7zM588.70 502.40h1.7v1.6h-1.7zM612.70 502.40h1.7v1.6h-1.7zM624.70 502.40h1.7v1.6h-1.7zM636.70 502.40h1.7v1.6h-1.7zM648.70 502.40h1.7v1.6h-1.7zM672.70 502.40h1.7v1.6h-1.7zM684.70 502.40h1.7v1.6h-1.7zM696.70 502.40h1.7v1.6h-1.7zM708.70 502.40h1.7v1.6h-1.7zM732.70 502.40h1.7v1.6h-1.7zM744.70 502.40h1.7v1.6h-1.7zM756.70 502.40h1.7v1.6h-1.7zM768.70 502.40h1.7v1.6h-1.7zM792.70 502.40h1.7v1.6h-1.7zM804.70 502.40h1.7v1.6h-1.7zM816.70 502.40h1.7v1.6h-1.7zM828.70 502.40h1.7v1.6h-1.7zM852.70 502.40h1.7v1.6h-1.7zM864.70 502.40h1.7v1.6h-1.7zM876.70 502.40h1.7v1.6h-1.7zM888.70 502.40h1.7v1.6h-1.7zM912.70 502.40h1.7v1.6h-1.7zM924.70 502.40h1.7v1.6h-1.7zM36.70 562.40h1.7v1.6h-1.7zM48.70 562.40h1.7v1.6h-1.7zM72.70 562.40h1.7v1.6h-1.7zM84.70 562.40h1.7v1.6h-1.7zM96.70 562.40h1.7v1.6h-1.7zM108.70 562.40h1.7v1.6h-1.7zM132.70 562.40h1.7v1.6h-1.7zM144.70 562.40h1.7v1.6h-1.7zM156.70 562.40h1.7v1.6h-1.7zM168.70 562.40h1.7v1.6h-1.7zM192.70 562.40h1.7v1.6h-1.7zM204.70 562.40h1.7v1.6h-1.7zM216.70 562.40h1.7v1.6h-1.7zM228.70 562.40h1.7v1.6h-1.7zM252.70 562.40h1.7v1.6h-1.7zM264.70 562.40h1.7v1.6h-1.7zM276.70 562.40h1.7v1.6h-1.7zM288.70 562.40h1.7v1.6h-1.7zM312.70 562.40h1.7v1.6h-1.7zM324.70 562.40h1.7v1.6h-1.7zM336.70 562.40h1.7v1.6h-1.7zM348.70 562.40h1.7v1.6h-1.7zM372.70 562.40h1.7v1.6h-1.7zM384.70 562.40h1.7v1.6h-1.7zM396.70 562.40h1.7v1.6h-1.7zM408.70 562.40h1.7v1.6h-1.7zM432.70 562.40h1.7v1.6h-1.7zM444.70 562.40h1.7v1.6h-1.7zM456.70 562.40h1.7v1.6h-1.7zM468.70 562.40h1.7v1.6h-1.7zM492.70 562.40h1.7v1.6h-1.7zM504.70 562.40h1.7v1.6h-1.7zM516.70 562.40h1.7v1.6h-1.7zM528.70 562.40h1.7v1.6h-1.7zM552.70 562.40h1.7v1.6h-1.7zM564.70 562.40h1.7v1.6h-1.7zM576.70 562.40h1.7v1.6h-1.7zM588.70 562.40h1.7v1.6h-1.7zM612.70 562.40h1.7v1.6h-1.7zM624.70 562.40h1.7v1.6h-1.7zM636.70 562.40h1.7v1.6h-1.7zM648.70 562.40h1.7v1.6h-1.7zM672.70 562.40h1.7v1.6h-1.7zM684.70 562.40h1.7v1.6h-1.7zM696.70 562.40h1.7v1.6h-1.7zM708.70 562.40h1.7v1.6h-1.7zM732.70 562.40h1.7v1.6h-1.7zM744.70 562.40h1.7v1.6h-1.7zM756.70 562.40h1.7v1.6h-1.7zM768.70 562.40h1.7v1.6h-1.7zM792.70 562.40h1.7v1.6h-1.7zM804.70 562.40h1.7v1.6h-1.7zM816.70 562.40h1.7v1.6h-1.7zM828.70 562.40h1.7v1.6h-1.7zM852.70 562.40h1.7v1.6h-1.7zM864.70 562.40h1.7v1.6h-1.7zM876.70 562.40h1.7v1.6h-1.7zM888.70 562.40h1.7v1.6h-1.7zM912.70 562.40h1.7v1.6h-1.7zM924.70 562.40h1.7v1.6h-1.7z" fill="#7a7a7a"/>
<path d="M36.75 321.5h1.6v3.2h-1.6zM48.75 321.5h1.6v3.2h-1.6zM60.75 321.5h1.6v3.2h-1.6zM72.75 321.5h1.6v3.2h-1.6zM84.75 321.5h1.6v3.2h-1.6zM96.75 321.5h1.6v3.2h-1.6zM108.75 321.5h1.6v3.2h-1.6zM120.75 321.5h1.6v3.2h-1.6zM132.75 321.5h1.6v3.2h-1.6zM144.75 321.5h1.6v3.2h-1.6zM156.75 321.5h1.6v3.2h-1.6zM168.75 321.5h1.6v3.2h-1.6zM180.75 321.5h1.6v3.2h-1.6zM192.75 321.5h1.6v3.2h-1.6zM204.75 321.5h1.6v3.2h-1.6zM216.75 321.5h1.6v3.2h-1.6zM228.75 321.5h1.6v3.2h-1.6zM240.75 321.5h1.6v3.2h-1.6zM252.75 321.5h1.6v3.2h-1.6zM264.75 321.5h1.6v3.2h-1.6zM276.75 321.5h1.6v3.2h-1.6zM288.75 321.5h1.6v3.2h-1.6zM300.75 321.5h1.6v3.2h-1.6zM312.75 321.5h1.6v3.2h-1.6zM324.75 321.5h1.6v3.2h-1.6zM336.75 321.5h1.6v3.2h-1.6zM348.75 321.5h1.6v3.2h-1.6zM360.75 321.5h1.6v3.2h-1.6zM372.75 321.5h1.6v3.2h-1.6zM384.75 321.5h1.6v3.2h-1.6zM396.75 321.5h1.6v3.2h-1.6zM408.75 321.5h1.6v3.2h-1.6zM420.75 321.5h1.6v3.2h-1.6zM432.75 321.5h1.6v3.2h-1.6zM444.75 321.5h1.6v3.2h-1.6zM456.75 321.5h1.6v3.2h-1.6zM468.75 321.5h1.6v3.2h-1.6zM492.75 321.5h1.6v3.2h-1.6zM504.75 321.5h1.6v3.2h-1.6zM516.75 321.5h1.6v3.2h-1.6zM528.75 321.5h1.6v3.2h-1.6zM540.75 321.5h1.6v3.2h-1.6zM552.75 321.5h1.6v3.2h-1.6zM564.75 321.5h1.6v3.2h-1.6zM576.75 321.5h1.6v3.2h-1.6zM588.75 321.5h1.6v3.2h-1.6zM600.75 321.5h1.6v3.2h-1.6zM612.75 321.5h1.6v3.2h-1.6zM624.75 321.5h1.6v3.2h-1.6zM636.75 321.5h1.6v3.2h-1.6zM648.75 321.5h1.6v3.2h-1.6zM660.75 321.5h1.6v3.2h-1.6zM672.75 321.5h1.6v3.2h-1.6zM684.75 321.5h1.6v3.2h-1.6zM696.75 321.5h1.6v3.2h-1.6zM708.75 321.5h1.6v3.2h-1.6zM720.75 321.5h1.6v3.2h-1.6zM732.75 321.5h1.6v3.2h-1.6zM744.75 321.5h1.6v3.2h-1.6zM756.75 321.5h1.6v3.2h-1.6zM768.75 321.5h1.6v3.2h-1.6zM780.75 321.5h1.6v3.2h-1.6zM792.75 321.5h1.6v3.2h-1.6zM804.75 321.5h1.6v3.2h-1.6zM816.75 321.5h1.6v3.2h-1.6zM828.75 321.5h1.6v3.2h-1.6zM840.75 321.5h1.6v3.2h-1.6zM852.75 321.5h1.6v3.2h-1.6zM864.75 321.5h1.6v3.2h-1.6zM876.75 321.5h1.6v3.2h-1.6zM888.75 321.5h1.6v3.2h-1.6zM900.75 321.5h1.6v3.2h-1.6zM912.75 321.5h1.6v3.2h-1.6zM924.75 321.5h1.6v3.2h-1.6z" fill="#d8d8d8"/>
<path d="M480.0 34.25h3.2v1.6h-3.2zM480.0 46.25h3.2v1.6h-3.2zM480.0 58.25h3.2v1.6h-3.2zM480.0 70.25h3.2v1.6h-3.2zM480.0 82.25h3.2v1.6h-3.2zM480.0 94.25h3.2v1.6h-3.2zM480.0 106.25h3.2v1.6h-3.2zM480.0 118.25h3.2v1.6h-3.2zM480.0 130.25h3.2v1.6h-3.2zM480.0 142.25h3.2v1.6h-3.2zM480.0 154.25h3.2v1.6h-3.2zM480.0 166.25h3.2v1.6h-3.2zM480.0 178.25h3.2v1.6h-3.2zM480.0 190.25h3.2v1.6h-3.2zM480.0 202.25h3.2v1.6h-3.2zM480.0 214.25h3.2v1.6h-3.2zM480.0 226.25h3.2v1.6h-3.2zM480.0 238.25h3.2v1.6h-3.2zM480.0 250.25h3.2v1.6h-3.2zM480.0 262.25h3.2v1.6h-3.2zM480.0 274.25h3.2v1.6h-3.2zM480.0 286.25h3.2v1.6h-3.2zM480.0 298.25h3.2v1.6h-3.2zM480.0 310.25h3.2v1.6h-3.2zM480.0 334.25h3.2v1.6h-3.2zM480.0 346.25h3.2v1.6h-3.2zM480.0 358.25h3.2v1.6h-3.2zM480.0 370.25h3.2v1.6h-3.2zM480.0 382.25h3.2v1.6h-3.2zM480.0 394.25h3.2v1.6h-3.2zM480.0 406.25h3.2v1.6h-3.2zM480.0 418.25h3.2v1.6h-3.2zM480.0 430.25h3.2v1.6h-3.2zM480.0 442.25h3.2v1.6h-3.2zM480.0 454.25h3.2v1.6h-3.2zM480.0 466.25h3.2v1.6h-3.2zM480.0 478.25h3.2v1.6h-3.2zM480.0 490.25h3.2v1.6h-3.2zM480.0 502.25h3.2v1.6h-3.2zM480.0 514.25h3.2v1.6h-3.2zM480.0 526.25h3.2v1.6h-3.2zM480.0 538.25h3.2v1.6h-3.2zM480.0 550.25h3.2v1.6h-3.2zM480.0 562.25h3.2v1.6h-3.2zM480.0 574.25h3.2v1.6h-3.2zM480.0 586.25h3.2v1.6h-3.2zM480.0 598.25h3.2v1.6h-3.2zM480.0 610.25h3.2v1.6h-3.2z" fill="#d8d8d8"/>
<path d="M36.75 25h1.5v2.5h-1.5zM36.75 618.1h1.5v2.5h-1.5zM48.75 25h1.5v2.5h-1.5zM48.75 618.1h1.5v2.5h-1.5zM60.75 25h1.5v5.5h-1.5zM60.75 615.1h1.5v5.5h-1.5zM72.75 25h1.5v2.5h-1.5zM72.75 618.1h1.5v2.5h-1.5zM84.75 25h1.5v2.5h-1.5zM84.75 618.1h1.5v2.5h-1.5zM96.75 25h1.5v2.5h-1.5zM96.75 618.1h1.5v2.5h-1.5zM108.75 25h1.5v2.5h-1.5zM108.75 618.1h1.5v2.5h-1.5zM120.75 25h1.5v5.5h-1.5zM120.75 615.1h1.5v5.5h-1.5zM132.75 25h1.5v2.5h-1.5zM132.75 618.1h1.5v2.5h-1.5zM144.75 25h1.5v2.5h-1.5zM144.75 618.1h1.5v2.5h-1.5zM156.75 25h1.5v2.5h-1.5zM156.75 618.1h1.5v2.5h-1.5zM168.75 25h1.5v2.5h-1.5zM168.75 618.1h1.5v2.5h-1.5zM180.75 25h1.5v5.5h-1.5zM180.75 615.1h1.5v5.5h-1.5zM192.75 25h1.5v2.5h-1.5zM192.75 618.1h1.5v2.5h-1.5zM204.75 25h1.5v2.5h-1.5zM204.75 618.1h1.5v2.5h-1.5zM216.75 25h1.5v2.5h-1.5zM216.75 618.1h1.5v2.5h-1.5zM228.75 25h1.5v2.5h-1.5zM228.75 618.1h1.5v2.5h-1.5zM240.75 25h1.5v5.5h-1.5zM240.75 615.1h1.5v5.5h-1.5zM252.75 25h1.5v2.5h-1.5zM252.75 618.1h1.5v2.5h-1.5zM264.75 25h1.5v2.5h-1.5zM264.75 618.1h1.5v2.5h-1.5zM276.75 25h1.5v2.5h-1.5zM276.75 618.1h1.5v2.5h-1.5zM288.75 25h1.5v2.5h-1.5zM288.75 618.1h1.5v2.5h-1.5zM300.75 25h1.5v5.5h-1.5zM300.75 615.1h1.5v5.5h-1.5zM312.75 25h1.5v2.5h-1.5zM312.75 618.1h1.5v2.5h-1.5zM324.75 25h1.5v2.5h-1.5zM324.75 618.1h1.5v2.5h-1.5zM336.75 25h1.5v2.5h-1.5zM336.75 618.1h1.5v2.5h-1.5zM348.75 25h1.5v2.5h-1.5zM348.75 618.1h1.5v2.5h-1.5zM360.75 25h1.5v5.5h-1.5zM360.75 615.1h1.5v5.5h-1.5zM372.75 25h1.5v2.5h-1.5zM372.75 618.1h1.5v2.5h-1.5zM384.75 25h1.5v2.5h-1.5zM384.75 618.1h1.5v2.5h-1.5zM396.75 25h1.5v2.5h-1.5zM396.75 618.1h1.5v2.5h-1.5zM408.75 25h1.5v2.5h-1.5zM408.75 618.1h1.5v2.5h-1.5zM420.75 25h1.5v5.5h-1.5zM420.75 615.1h1.5v5.5h-1.5zM432.75 25h1.5v2.5h-1.5zM432.75 618.1h1.5v2.5h-1.5zM444.75 25h1.5v2.5h-1.5zM444.75 618.1h1.5v2.5h-1.5zM456.75 25h1.5v2.5h-1.5zM456.75 618.1h1.5v2.5h-1.5zM468.75 25h1.5v2.5h-1.5zM468.75 618.1h1.5v2.5h-1.5zM480.75 25h1.5v5.5h-1.5zM480.75 615.1h1.5v5.5h-1.5zM492.75 25h1.5v2.5h-1.5zM492.75 618.1h1.5v2.5h-1.5zM504.75 25h1.5v2.5h-1.5zM504.75 618.1h1.5v2.5h-1.5zM516.75 25h1.5v2.5h-1.5zM516.75 618.1h1.5v2.5h-1.5zM528.75 25h1.5v2.5h-1.5zM528.75 618.1h1.5v2.5h-1.5zM540.75 25h1.5v5.5h-1.5zM540.75 615.1h1.5v5.5h-1.5zM552.75 25h1.5v2.5h-1.5zM552.75 618.1h1.5v2.5h-1.5zM564.75 25h1.5v2.5h-1.5zM564.75 618.1h1.5v2.5h-1.5zM576.75 25h1.5v2.5h-1.5zM576.75 618.1h1.5v2.5h-1.5zM588.75 25h1.5v2.5h-1.5zM588.75 618.1h1.5v2.5h-1.5zM600.75 25h1.5v5.5h-1.5zM600.75 615.1h1.5v5.5h-1.5zM612.75 25h1.5v2.5h-1.5zM612.75 618.1h1.5v2.5h-1.5zM624.75 25h1.5v2.5h-1.5zM624.75 618.1h1.5v2.5h-1.5zM636.75 25h1.5v2.5h-1.5zM636.75 618.1h1.5v2.5h-1.5zM648.75 25h1.5v2.5h-1.5zM648.75 618.1h1.5v2.5h-1.5zM660.75 25h1.5v5.5h-1.5zM660.75 615.1h1.5v5.5h-1.5zM672.75 25h1.5v2.5h-1.5zM672.75 618.1h1.5v2.5h-1.5zM684.75 25h1.5v2.5h-1.5zM684.75 618.1h1.5v2.5h-1.5zM696.75 25h1.5v2.5h-1.5zM696.75 618.1h1.5v2.5h-1.5zM708.75 25h1.5v2.5h-1.5zM708.75 618.1h1.5v2.5h-1.5zM720.75 25h1.5v5.5h-1.5zM720.75 615.1h1.5v5.5h-1.5zM732.75 25h1.5v2.5h-1.5zM732.75 618.1h1.5v2.5h-1.5zM744.75 25h1.5v2.5h-1.5zM744.75 618.1h1.5v2.5h-1.5zM756.75 25h1.5v2.5h-1.5zM756.75 618.1h1.5v2.5h-1.5zM768.75 25h1.5v2.5h-1.5zM768.75 618.1h1.5v2.5h-1.5zM780.75 25h1.5v5.5h-1.5zM780.75 615.1h1.5v5.5h-1.5zM792.75 25h1.5v2.5h-1.5zM792.75 618.1h1.5v2.5h-1.5zM804.75 25h1.5v2.5h-1.5zM804.75 618.1h1.5v2.5h-1.5zM816.75 25h1.5v2.5h-1.5zM816.75 618.1h1.5v2.5h-1.5zM828.75 25h1.5v2.5h-1.5zM828.75 618.1h1.5v2.5h-1.5zM840.75 25h1.5v5.5h-1.5zM840.75 615.1h1.5v5.5h-1.5zM852.75 25h1.5v2.5h-1.5zM852.75 618.1h1.5v2.5h-1.5zM864.75 25h1.5v2.5h-1.5zM864.75 618.1h1.5v2.5h-1.5zM876.75 25h1.5v2.5h-1.5zM876.75 618.1h1.5v2.5h-1.5zM888.75 25h1.5v2.5h-1.5zM888.75 618.1h1.5v2.5h-1.5zM900.75 25h1.5v5.5h-1.5zM900.75 615.1h1.5v5.5h-1.5zM912.75 25h1.5v2.5h-1.5zM912.75 618.1h1.5v2.5h-1.5zM924.75 25h1.5v2.5h-1.5zM924.75 618.1h1.5v2.5h-1.5zM26 34.25h4v1.5h-4zM930 34.25h4v1.5h-4zM26 46.25h4v1.5h-4zM930 46.25h4v1.5h-4zM26 58.25h4v1.5h-4zM930 58.25h4v1.5h-4zM26 70.25h4v1.5h-4zM930 70.25h4v1.5h-4zM26 82.25h5.5v1.5h-5.5zM928.5 82.25h5.5v1.5h-5.5zM26 94.25h4v1.5h-4zM930 94.25h4v1.5h-4zM26 106.25h4v1.5h-4zM930 106.25h4v1.5h-4zM26 118.25h4v1.5h-4zM930 118.25h4v1.5h-4zM26 130.25h4v1.5h-4zM930 130.25h4v1.5h-4zM26 142.25h5.5v1.5h-5.5zM928.5 142.25h5.5v1.5h-5.5zM26 154.25h4v1.5h-4zM930 154.25h4v1.5h-4zM26 166.25h4v1.5h-4zM930 166.25h4v1.5h-4zM26 178.25h4v1.5h-4zM930 178.25h4v1.5h-4zM26 190.25h4v1.5h-4zM930 190.25h4v1.5h-4zM26 202.25h5.5v1.5h-5.5zM928.5 202.25h5.5v1.5h-5.5zM26 214.25h4v1.5h-4zM930 214.25h4v1.5h-4zM26 226.25h4v1.5h-4zM930 226.25h4v1.5h-4zM26 238.25h4v1.5h-4zM930 238.25h4v1.5h-4zM26 250.25h4v1.5h-4zM930 250.25h4v1.5h-4zM26 262.25h5.5v1.5h-5.5zM928.5 262.25h5.5v1.5h-5.5zM26 274.25h4v1.5h-4zM930 274.25h4v1.5h-4zM26 286.25h4v1.5h-4zM930 286.25h4v1.5h-4zM26 298.25h4v1.5h-4zM930 298.25h4v1.5h-4zM26 310.25h4v1.5h-4zM930 310.25h4v1.5h-4zM26 322.25h7v1.5h-7zM927 322.25h7v1.5h-7zM26 334.25h4v1.5h-4zM930 334.25h4v1.5h-4zM26 346.25h4v1.5h-4zM930 346.25h4v1.5h-4zM26 358.25h4v1.5h-4zM930 358.25h4v1.5h-4zM26 370.25h4v1.5h-4zM930 370.25h4v1.5h-4zM26 382.25h5.5v1.5h-5.5zM928.5 382.25h5.5v1.5h-5.5zM26 394.25h4v1.5h-4zM930 394.25h4v1.5h-4zM26 406.25h4v1.5h-4zM930 406.25h4v1.5h-4zM26 418.25h4v1.5h-4zM930 418.25h4v1.5h-4zM26 430.25h4v1.5h-4zM930 430.25h4v1.5h-4zM26 442.25h5.5v1.5h-5.5zM928.5 442.25h5.5v1.5h-5.5zM26 454.25h4v1.5h-4zM930 454.25h4v1.5h-4zM26 466.25h4v1.5h-4zM930 466.25h4v1.5h-4zM26 478.25h4v1.5h-4zM930 478.25h4v1.5h-4zM26 490.25h4v1.5h-4zM930 490.25h4v1.5h-4zM26 502.25h5.5v1.5h-5.5zM928.5 502.25h5.5v1.5h-5.5zM26 514.25h4v1.5h-4zM930 514.25h4v1.5h-4zM26 526.25h4v1.5h-4zM930 526.25h4v1.5h-4zM26 538.25h4v1.5h-4zM930 538.25h4v1.5h-4zM26 550.25h4v1.5h-4zM930 550.25h4v1.5h-4zM26 562.25h5.5v1.5h-5.5zM928.5 562.25h5.5v1.5h-5.5zM26 574.25h4v1.5h-4zM930 574.25h4v1.5h-4zM26 586.25h4v1.5h-4zM930 586.25h4v1.5h-4zM26 598.25h4v1.5h-4zM930 598.25h4v1.5h-4zM26 610.25h4v1.5h-4zM930 610.25h4v1.5h-4z" fill="#f0f0f0"/>
<path d="M180.9 316.5h1.8v14h-1.8zM780.9 316.5h1.8v14h-1.8z" fill="#d8d8d8"/>
<path d="M36 513.2h1v7.8h-1zM37 511.4h1v8.9h-1zM38 511.9h1v6.6h-1zM39 511.2h1v9.8h-1zM40 511.5h1v7.7h-1zM41 512.3h1v6.2h-1zM42 513.3h1v8.9h-1zM43 513.3h1v5.7h-1zM44 511.8h1v7.7h-1zM45 513.6h1v5.0h-1zM46 514.0h1v4.8h-1zM47 513.6h1v5.8h-1zM48 513.2h1v6.0h-1zM49 513.4h1v7.9h-1zM50 513.3h1v7.2h-1zM51 512.3h1v6.4h-1zM52 512.6h1v6.3h-1zM53 512.1h1v6.8h-1zM54 512.0h1v6.7h-1zM55 514.0h1v5.2h-1zM56 514.2h1v5.3h-1zM57 513.7h1v6.5h-1zM58 512.5h1v8.0h-1zM59 513.4h1v8.1h-1zM60 513.7h1v5.2h-1zM61 512.4h1v9.8h-1zM62 510.4h1v12.0h-1zM63 514.4h1v7.4h-1zM64 514.2h1v6.9h-1zM65 514.4h1v5.3h-1zM66 512.7h1v8.7h-1zM67 511.9h1v8.0h-1zM68 512.6h1v9.4h-1zM69 514.4h1v5.0h-1zM70 514.2h1v5.6h-1zM71 511.6h1v8.1h-1zM72 514.0h1v7.5h-1zM73 512.4h1v7.5h-1zM74 513.0h1v6.6h-1zM75 512.0h1v8.0h-1zM76 512.1h1v9.6h-1zM77 514.6h1v4.8h-1zM78 514.1h1v5.9h-1zM79 512.7h1v6.8h-1zM80 514.2h1v8.2h-1zM81 514.6h1v6.6h-1zM82 514.3h1v5.5h-1zM83 514.4h1v5.3h-1zM84 514.4h1v5.3h-1zM85 514.8h1v4.7h-1zM86 512.9h1v7.9h-1zM87 512.7h1v7.5h-1zM88 512.5h1v10.3h-1zM89 513.0h1v8.2h-1zM90 514.7h1v5.9h-1zM91 512.2h1v7.7h-1zM92 512.0h1v9.2h-1zM93 513.7h1v6.5h-1zM94 512.8h1v8.1h-1zM95 512.5h1v11.2h-1zM96 514.4h1v7.1h-1zM97 513.3h1v8.4h-1zM98 512.4h1v9.5h-1zM99 514.1h1v8.6h-1zM100 512.6h1v7.8h-1zM101 514.7h1v8.9h-1zM102 513.7h1v7.6h-1zM103 512.3h1v7.5h-1zM104 512.9h1v9.4h-1zM105 515.2h1v9.1h-1zM106 512.9h1v6.7h-1zM107 511.0h1v9.9h-1zM108 514.5h1v5.8h-1zM109 513.6h1v7.0h-1zM110 512.9h1v7.5h-1zM111 513.4h1v7.2h-1zM112 515.2h1v5.4h-1zM113 513.9h1v7.6h-1zM114 515.0h1v5.5h-1zM115 514.4h1v6.2h-1zM116 515.1h1v6.2h-1zM117 515.2h1v4.9h-1zM118 514.9h1v5.5h-1zM119 513.8h1v6.2h-1zM120 513.7h1v6.2h-1zM121 515.2h1v5.0h-1zM122 509.4h1v11.5h-1zM123 514.0h1v10.6h-1zM124 515.2h1v5.0h-1zM125 515.4h1v5.1h-1zM126 514.5h1v6.0h-1zM127 510.0h1v10.2h-1zM128 515.5h1v4.7h-1zM129 512.6h1v7.9h-1zM130 514.0h1v6.4h-1zM131 514.0h1v8.6h-1zM132 515.6h1v5.3h-1zM133 513.3h1v7.6h-1zM134 513.1h1v9.8h-1zM135 515.1h1v8.7h-1zM136 514.2h1v10.0h-1zM137 515.1h1v7.6h-1zM138 513.6h1v9.7h-1zM139 513.9h1v8.9h-1zM140 513.5h1v7.8h-1zM141 513.6h1v10.7h-1zM142 513.8h1v6.5h-1zM143 513.3h1v7.1h-1zM144 514.7h1v5.9h-1zM145 516.0h1v5.2h-1zM146 515.6h1v8.5h-1zM147 513.5h1v7.1h-1zM148 515.1h1v7.6h-1zM149 515.1h1v5.7h-1zM150 514.6h1v6.3h-1zM151 515.4h1v5.1h-1zM152 515.4h1v7.1h-1zM153 513.5h1v7.8h-1zM154 513.2h1v10.1h-1zM155 515.5h1v7.8h-1zM156 514.3h1v11.0h-1zM157 513.0h1v7.7h-1zM158 515.0h1v6.6h-1zM159 511.2h1v11.8h-1zM160 513.3h1v10.5h-1zM161 514.5h1v10.3h-1zM162 514.1h1v7.5h-1zM163 513.1h1v10.8h-1zM164 515.7h1v5.3h-1zM165 515.1h1v6.0h-1zM299 512.7h1v7.0h-1zM300 512.8h1v6.4h-1zM301 513.6h1v6.0h-1zM302 512.5h1v6.6h-1zM303 512.6h1v9.7h-1zM304 514.5h1v6.7h-1zM305 512.7h1v9.8h-1zM306 514.3h1v8.9h-1zM307 514.1h1v7.0h-1zM308 513.7h1v8.4h-1zM309 514.1h1v5.1h-1zM310 513.7h1v5.8h-1zM311 512.4h1v6.9h-1zM312 514.5h1v6.7h-1zM313 514.6h1v4.6h-1zM314 512.7h1v6.5h-1zM315 511.9h1v9.2h-1zM316 513.3h1v8.9h-1zM317 513.8h1v7.4h-1zM318 514.7h1v7.0h-1zM319 512.7h1v8.0h-1zM320 511.9h1v8.0h-1zM321 513.8h1v5.9h-1zM322 514.4h1v7.1h-1zM323 514.7h1v4.6h-1zM324 514.0h1v5.3h-1zM325 511.6h1v8.5h-1zM326 512.4h1v7.6h-1zM327 512.3h1v8.7h-1zM328 512.8h1v7.4h-1zM329 514.7h1v4.7h-1zM330 514.2h1v8.4h-1zM331 514.4h1v5.0h-1zM332 514.7h1v7.8h-1zM333 512.5h1v7.3h-1zM334 514.6h1v4.8h-1zM335 511.7h1v11.6h-1zM336 512.4h1v7.9h-1zM337 514.9h1v4.6h-1zM338 512.1h1v11.4h-1zM339 513.2h1v7.2h-1zM340 511.8h1v7.9h-1zM341 512.5h1v7.8h-1zM342 515.0h1v5.1h-1zM343 513.0h1v10.9h-1zM344 513.2h1v7.1h-1zM345 515.0h1v4.8h-1zM346 513.8h1v8.9h-1zM347 511.4h1v9.1h-1zM348 513.2h1v6.5h-1zM349 514.4h1v9.5h-1zM350 514.4h1v5.3h-1zM351 512.7h1v7.2h-1zM352 514.9h1v5.2h-1zM353 515.2h1v6.4h-1zM354 515.1h1v4.6h-1zM355 514.5h1v5.8h-1zM356 513.4h1v6.6h-1zM357 515.1h1v4.7h-1zM358 513.9h1v7.6h-1zM359 515.1h1v5.3h-1zM360 514.9h1v5.3h-1zM361 512.8h1v9.8h-1zM362 515.2h1v9.1h-1zM363 514.7h1v6.1h-1zM364 515.4h1v4.9h-1zM365 514.9h1v7.4h-1zM366 513.5h1v10.9h-1zM367 512.7h1v7.3h-1zM368 515.2h1v8.1h-1zM369 515.4h1v4.6h-1zM370 513.6h1v6.5h-1zM371 515.2h1v7.1h-1zM372 513.7h1v8.3h-1zM373 513.0h1v7.4h-1zM374 513.6h1v6.4h-1zM375 513.1h1v10.8h-1zM376 511.7h1v8.6h-1zM377 513.5h1v10.8h-1zM378 513.6h1v6.7h-1zM379 515.3h1v4.8h-1zM380 513.8h1v6.7h-1zM381 514.2h1v5.9h-1zM382 513.5h1v7.5h-1zM383 514.1h1v10.1h-1zM384 513.4h1v6.9h-1zM385 514.0h1v10.1h-1zM386 513.5h1v6.9h-1zM387 515.1h1v5.3h-1zM388 513.4h1v6.9h-1zM389 515.3h1v6.9h-1zM390 514.9h1v5.8h-1zM391 513.7h1v10.2h-1zM392 515.3h1v7.3h-1zM393 515.8h1v5.3h-1zM394 513.7h1v9.4h-1zM395 514.1h1v6.9h-1zM396 515.4h1v8.6h-1zM397 515.4h1v8.1h-1zM398 515.8h1v8.3h-1zM399 515.7h1v5.2h-1zM400 513.5h1v11.1h-1zM401 514.6h1v7.4h-1zM402 514.1h1v10.2h-1zM403 515.6h1v6.8h-1zM404 515.9h1v5.4h-1zM405 513.4h1v8.0h-1zM406 515.6h1v8.6h-1zM407 511.2h1v11.3h-1zM408 513.8h1v9.9h-1zM409 515.5h1v9.3h-1zM410 514.0h1v6.8h-1zM411 515.0h1v8.1h-1zM412 515.6h1v5.2h-1zM413 516.1h1v5.1h-1zM414 514.1h1v7.4h-1zM415 515.7h1v7.7h-1zM416 515.8h1v7.4h-1zM417 513.7h1v7.9h-1zM418 514.4h1v7.2h-1zM419 514.1h1v7.3h-1zM420 515.7h1v6.1h-1zM421 515.4h1v9.5h-1zM422 515.9h1v7.8h-1zM423 513.8h1v10.3h-1zM424 515.9h1v5.9h-1zM425 515.7h1v5.4h-1zM426 515.5h1v6.1h-1zM427 513.5h1v7.4h-1zM428 516.3h1v5.5h-1zM429 516.2h1v8.2h-1zM430 515.2h1v5.8h-1zM431 516.2h1v5.1h-1zM432 514.4h1v9.8h-1zM433 514.4h1v7.1h-1zM434 515.0h1v6.5h-1zM435 515.4h1v6.0h-1zM436 513.8h1v10.9h-1zM437 514.5h1v9.8h-1zM438 515.7h1v6.1h-1zM439 515.7h1v5.9h-1zM440 515.9h1v7.3h-1zM441 514.5h1v10.1h-1zM442 515.8h1v8.7h-1zM443 516.5h1v5.0h-1zM444 516.1h1v5.8h-1zM445 516.0h1v5.2h-1zM446 516.1h1v5.7h-1zM447 516.1h1v8.5h-1zM448 515.7h1v8.6h-1zM449 514.5h1v7.6h-1zM450 516.4h1v5.1h-1zM451 515.0h1v6.6h-1zM452 514.8h1v7.4h-1zM453 516.1h1v5.4h-1zM454 516.0h1v8.8h-1zM585 514.3h1v5.0h-1zM586 513.6h1v8.1h-1zM587 511.6h1v8.9h-1zM588 512.2h1v9.4h-1zM589 514.5h1v5.3h-1zM590 514.3h1v5.0h-1zM591 513.2h1v7.4h-1zM592 514.1h1v5.7h-1zM593 512.5h1v7.1h-1zM594 514.2h1v5.5h-1zM595 514.1h1v5.1h-1zM596 511.4h1v7.9h-1zM597 513.7h1v6.1h-1zM598 513.8h1v5.5h-1zM599 514.0h1v7.7h-1zM600 509.1h1v13.5h-1zM601 514.0h1v8.9h-1zM602 513.6h1v5.8h-1zM603 512.3h1v7.4h-1zM604 512.0h1v7.5h-1zM605 513.5h1v9.4h-1zM606 511.8h1v11.7h-1zM607 513.2h1v8.7h-1zM608 514.3h1v6.0h-1zM609 508.6h1v15.4h-1zM610 512.2h1v7.4h-1zM611 512.7h1v9.3h-1zM612 513.6h1v6.0h-1zM613 514.3h1v5.3h-1zM614 512.6h1v10.1h-1zM615 514.9h1v4.9h-1zM616 514.2h1v6.3h-1zM617 510.1h1v13.1h-1zM618 512.6h1v7.5h-1zM619 512.5h1v11.3h-1zM620 510.8h1v9.4h-1zM621 513.1h1v6.7h-1zM622 513.4h1v7.0h-1zM623 512.6h1v7.8h-1zM624 514.5h1v7.3h-1zM625 514.5h1v8.5h-1zM626 514.5h1v8.4h-1zM627 514.9h1v5.3h-1zM628 512.3h1v7.9h-1zM629 513.5h1v7.2h-1zM630 514.7h1v8.2h-1zM631 513.7h1v6.7h-1zM632 515.5h1v5.1h-1zM633 512.6h1v10.6h-1zM634 515.2h1v8.7h-1zM635 513.1h1v7.6h-1zM636 514.9h1v7.1h-1zM637 513.6h1v9.5h-1zM638 515.3h1v8.4h-1zM639 515.2h1v7.3h-1zM640 515.2h1v7.4h-1zM641 515.0h1v9.5h-1zM642 513.3h1v8.4h-1zM643 513.9h1v7.0h-1zM644 513.0h1v7.5h-1zM645 515.6h1v5.1h-1zM646 515.3h1v5.7h-1zM647 515.7h1v4.5h-1zM648 513.8h1v7.1h-1zM649 515.3h1v5.5h-1zM650 513.9h1v7.0h-1zM651 514.0h1v9.5h-1zM652 512.9h1v8.4h-1zM653 515.2h1v6.9h-1zM654 515.5h1v5.8h-1zM655 515.6h1v7.5h-1zM656 515.4h1v6.0h-1zM657 515.5h1v5.4h-1zM658 514.2h1v6.8h-1zM659 514.2h1v7.1h-1zM660 515.7h1v5.0h-1zM661 515.0h1v9.0h-1zM662 515.4h1v5.4h-1zM663 514.7h1v6.6h-1zM664 513.8h1v6.9h-1zM665 515.5h1v8.6h-1zM666 515.2h1v9.3h-1zM667 515.5h1v5.5h-1zM668 514.1h1v9.8h-1zM669 513.3h1v7.8h-1zM670 513.6h1v7.6h-1zM671 514.8h1v6.6h-1zM672 515.8h1v8.8h-1zM673 514.4h1v7.4h-1zM674 515.8h1v6.0h-1zM675 513.4h1v10.6h-1zM676 515.0h1v9.7h-1zM677 514.5h1v9.6h-1zM678 514.4h1v7.3h-1zM679 516.1h1v7.9h-1zM680 513.7h1v8.3h-1zM681 516.1h1v8.6h-1zM682 516.1h1v8.7h-1zM683 514.2h1v10.4h-1zM684 514.8h1v6.7h-1zM685 516.4h1v7.3h-1zM686 514.7h1v6.8h-1zM687 516.2h1v5.9h-1zM688 514.0h1v7.5h-1zM689 516.3h1v9.0h-1zM690 514.3h1v7.2h-1zM691 514.7h1v8.9h-1zM692 514.1h1v7.9h-1zM693 516.2h1v6.8h-1zM694 514.6h1v7.1h-1zM695 516.3h1v8.8h-1zM696 514.1h1v8.1h-1zM697 513.9h1v8.6h-1zM698 516.9h1v8.2h-1zM699 514.6h1v10.9h-1zM700 516.4h1v5.7h-1zM701 514.8h1v8.8h-1zM702 515.6h1v6.7h-1zM703 514.9h1v9.7h-1zM704 517.0h1v8.1h-1zM705 516.7h1v7.7h-1zM706 515.2h1v6.5h-1zM707 516.4h1v7.2h-1zM708 516.3h1v9.4h-1zM709 516.9h1v6.6h-1zM710 516.4h1v6.3h-1zM711 515.9h1v9.4h-1zM712 516.7h1v5.3h-1zM713 516.6h1v6.0h-1zM714 515.1h1v7.6h-1zM715 515.5h1v6.6h-1zM716 517.2h1v5.6h-1zM717 516.7h1v8.5h-1zM718 516.0h1v8.7h-1zM719 516.6h1v6.2h-1zM720 516.9h1v7.9h-1zM721 517.3h1v7.5h-1zM722 516.1h1v8.7h-1zM723 517.6h1v5.4h-1zM724 517.5h1v4.6h-1zM725 517.3h1v5.8h-1zM726 515.8h1v7.2h-1zM727 515.1h1v10.4h-1zM728 515.0h1v7.4h-1zM729 515.9h1v9.0h-1zM730 515.4h1v7.5h-1zM731 515.1h1v7.3h-1zM732 517.7h1v4.8h-1zM166 320h104v2.7h-104zM167 322.5h3v2.6h-3zM171 322.5h4v2.6h-4zM176 322.5h2v2.5h-2zM179 322.5h3v2.4h-3zM183.5 322.5h2v2.2h-2zM186.5 322.5h3v2.4h-3zM190.5 322.5h3v2.9h-3zM194.5 322.5h4v3.0h-4zM199.5 322.5h4v2.3h-4zM205.0 322.5h2v2.5h-2zM208.5 322.5h2v2.9h-2zM211.5 322.5h2v2.5h-2zM215.0 322.5h3v2.2h-3zM219.5 322.5h2v2.5h-2zM223.0 322.5h4v2.3h-4zM228.0 322.5h3v2.5h-3zM233.0 322.5h2v2.9h-2zM237.0 322.5h2v2.8h-2zM241.0 322.5h2v2.3h-2zM244.5 322.5h2v2.3h-2zM248.0 322.5h3v2.9h-3zM252.5 322.5h4v3.0h-4zM258.0 322.5h3v2.2h-3zM262.5 322.5h2v2.6h-2zM266.5 322.5h2v2.8h-2zM455 320h100v2.7h-100zM456 322.5h2v2.3h-2zM460 322.5h3v3.0h-3zM465 322.5h3v2.4h-3zM469 322.5h3v2.5h-3zM473 322.5h3v2.9h-3zM477 322.5h2v2.3h-2zM480.5 322.5h3v2.5h-3zM485.5 322.5h3v2.9h-3zM490.0 322.5h2v2.5h-2zM494.0 322.5h3v2.4h-3zM498.0 322.5h3v2.9h-3zM502.0 322.5h2v2.8h-2zM505.0 322.5h3v2.5h-3zM509.0 322.5h4v3.0h-4zM514.5 322.5h4v2.7h-4zM519.5 322.5h2v2.9h-2zM522.5 322.5h2v2.8h-2zM525.5 322.5h3v2.8h-3zM529.5 322.5h2v2.7h-2zM533.0 322.5h3v2.8h-3zM537.0 322.5h3v2.9h-3zM542.0 322.5h3v2.2h-3zM546.5 322.5h3v2.9h-3zM551.5 322.5h2.5v2.5h-2.5zM733 320h201v2.7h-201zM734 322.5h2v3.0h-2zM737 322.5h2v2.4h-2zM741 322.5h3v2.6h-3zM745.5 322.5h2v2.7h-2zM748.5 322.5h3v2.8h-3zM753.0 322.5h4v2.6h-4zM758.5 322.5h2v2.9h-2zM761.5 322.5h4v2.3h-4zM767.0 322.5h3v2.5h-3zM772.0 322.5h2v2.9h-2zM775.5 322.5h2v2.4h-2zM779.0 322.5h4v2.2h-4zM784.0 322.5h3v2.4h-3zM788.0 322.5h2v2.2h-2zM792.0 322.5h2v2.9h-2zM795.5 322.5h4v2.7h-4zM800.5 322.5h2v2.8h-2zM803.5 322.5h4v2.2h-4zM808.5 322.5h4v2.5h-4zM813.5 322.5h2v2.4h-2zM816.5 322.5h3v2.9h-3zM820.5 322.5h3v2.5h-3zM824.5 322.5h3v2.5h-3zM829.0 322.5h2v2.2h-2zM833.0 322.5h2v2.3h-2zM836.5 322.5h3v3.0h-3zM841.5 322.5h3v3.0h-3zM845.5 322.5h2v2.9h-2zM849.0 322.5h2v2.5h-2zM852.5 322.5h2v2.3h-2zM855.5 322.5h2v2.3h-2zM858.5 322.5h3v2.9h-3zM863.5 322.5h3v2.6h-3zM867.5 322.5h4v2.7h-4zM872.5 322.5h4v2.4h-4zM878.5 322.5h2v2.8h-2zM882.0 322.5h4v3.0h-4zM888.0 322.5h4v2.4h-4zM893.5 322.5h2v2.4h-2zM897.5 322.5h2v2.7h-2zM901.0 322.5h2v3.0h-2zM904.0 322.5h3v2.8h-3zM908.0 322.5h2v2.7h-2zM911.0 322.5h2v2.6h-2zM914.0 322.5h4v2.8h-4zM919.5 322.5h4v2.5h-4zM924.5 322.5h2v2.9h-2zM927.5 322.5h4v2.2h-4zM932.5 322.5h0.5v3.0h-0.5z" fill="#f2f200"/>
<path d="M26.5 419.0 L27.5 431.0 L30.4 457.0 L33.0 483.0 L36.0 509.0 L36.5 513.0M269.8 322.0 L269.8 353.0 L273.9 356.9 L277.0 360.0 L279.5 365.0 L281.4 372.5 L283.2 381.2 L285.1 390.0 L287.0 402.5 L288.9 415.0 L291.0 427.5 L293.0 450.6 L296.0 481.0 L299.1 510.0 L299.5 514.0M554.9 322.0 L554.9 353.5 L558.6 356.2 L561.1 359.4 L564.9 360.5 L566.8 367.5 L568.6 377.5 L570.5 387.5 L572.4 397.5 L574.2 410.0 L576.1 422.5 L579.0 450.6 L582.0 481.0 L585.1 510.0 L585.5 514.0M166 517 L166 321M455.5 517 L455.5 321M733 517 L733 321" fill="none" stroke="#f2f200" stroke-width="1.8"/>
<path d="M0.8 311.8 H15 Q16.5 311.8 17.3 312.8 L23.8 321.4 L17.3 330.2 Q16.5 331.4 15 331.4 H0.8 Z" fill="#000" stroke="#e6e61a" stroke-width="1.6"/>
<text x="4.2" y="327.6" font-family="Liberation Sans" font-size="17" fill="#e6e61a" stroke="#e6e61a" stroke-width="0.3">2</text>
<text x="28" y="19.3" font-family="Liberation Mono" font-size="18.2" letter-spacing="1.300" fill="#0a1d52" stroke-width="0.35" stroke="#0a1d52" xml:space="preserve">AKTAKOM</text>
<rect x="144" y="1" width="96" height="21" rx="10.5" fill="#ee0000"/>
<text x="168" y="17.5" font-family="Liberation Mono" font-size="18.2" letter-spacing="1.300" fill="#500000" stroke-width="0.4" stroke="#500000" xml:space="preserve">Stop</text>
<rect x="300" y="1.5" width="361" height="21" rx="10.5" fill="#000"/>
<rect x="312" y="10.4" width="337" height="1.6" fill="#c8c83a"/>
<path d="M353 2.4h2v20h-2zM353 2.4h3.5v1.6h-3.5zM605 2.4h2v20h-2zM603.3 2.4h3.7v1.6h-3.7z" fill="#d4d4d4"/>
<path d="M436.2 2.2h6.6v2.5h-6.6zM438.6 4.5h2.4v3.3h-2.4z" fill="#d030d0"/>
<rect x="672" y="1.5" width="129" height="21" rx="10.5" fill="#000"/>
<path d="M679 4.6 H689.4 Q691.2 4.6 691.2 6.4 V16 Q689.5 18.8 686.5 19.8 H682 Q679 18.8 677.2 16 V6.4 Q677.2 4.6 679 4.6 Z" fill="none" stroke="#8434d8" stroke-width="1.7"/>
<path d="M679.3 7.5h9.6v2h-9.6zM683.3 9h2v7.3h-2z" fill="#a840d8"/>
<text transform="translate(695.5 19.3) scale(0.8 1)" x="0" y="0" font-family="Liberation Mono" font-size="18.2" letter-spacing="4.205" fill="#f4f4f4"  xml:space="preserve">480.0ms</text>
<rect x="820" y="1.5" width="71.5" height="21" rx="10.5" fill="#000"/>
<text transform="translate(831.8 17.9) scale(0.84 1)" x="0" y="0" font-family="Liberation Mono" font-size="17.5" letter-spacing="3.905" fill="#f4f4f4"  xml:space="preserve">5:57</text>
<defs><linearGradient id="gg" x1="0" y1="0" x2="1" y2="0"><stop offset="0" stop-color="#66d858"/><stop offset="1" stop-color="#229a10"/></linearGradient></defs>
<g transform="translate(915.2 14.2) rotate(-27)"><rect x="-5.6" y="-3.6" width="11.2" height="7.2" fill="#1a3a92"/><rect x="-4.6" y="-2.6" width="9.2" height="5.2" fill="none" stroke="#d8b4cc" stroke-width="1.3"/><rect x="-3" y="-1.4" width="6" height="2.8" fill="#34407a"/></g>
<path d="M907.2 8.5 C906.8 5.5 909 3.8 911.5 3.9 C914 4 915.8 5.2 915.6 7.5 C915.4 9.5 913.2 10.5 911.6 11.2 C910.8 11.6 910.2 12.4 909.8 13.2 C908.6 12 907.4 10.5 907.2 8.5 Z" fill="url(#gg)"/>
<rect x="0" y="623" width="383" height="97" fill="#44a6cf"/>
<rect x="0" y="646.3" width="252" height="2" fill="#1c5a7c"/>
<rect x="1.5" y="623" width="248" height="23.5" rx="4" fill="#000"/>
<rect x="1.5" y="648" width="248" height="22" rx="4" fill="#000"/>
<rect x="253.5" y="623" width="126.5" height="47" rx="6" fill="#000"/>
<rect x="1.5" y="673.5" width="378.5" height="44" rx="4" fill="#000"/>
<rect x="383" y="623" width="577" height="97" fill="#0884e2"/>
<rect x="382" y="623" width="1.5" height="97" fill="#1a4e86"/>
<rect x="383.5" y="645.5" width="572.5" height="72" fill="#0862a8"/>
<rect x="383.5" y="645.5" width="110" height="72" fill="#0a5cb0"/>
<rect x="383" y="623" width="119" height="22" rx="11" fill="#000"/>
<rect x="798" y="624" width="154" height="20.5" rx="10.25" fill="#000"/>
<rect x="386.8" y="648.5" width="107.4" height="66.8" rx="3" fill="#0044a0"/>
<rect x="386.8" y="648.5" width="105.9" height="65.3" rx="3" fill="#4ab0ff"/>
<rect x="388.0" y="649.7" width="104.7" height="64.1" rx="2.5" fill="#0c82e4"/>
<rect x="717" y="649" width="106.3" height="65.5" rx="3" fill="#0044a0"/>
<rect x="717" y="649" width="104.8" height="64.0" rx="3" fill="#4ab0ff"/>
<rect x="718.2" y="650.2" width="103.6" height="62.8" rx="2.5" fill="#0c82e4"/>
<text x="415.5" y="674" font-family="Liberation Mono" font-size="18.2" letter-spacing="0.800" fill="#0a1d52" stroke-width="0.35" stroke="#0a1d52" xml:space="preserve">Type</text>
<rect x="409.2" y="685" width="60" height="24.2" fill="#e6e6e6"/>
<text x="410.5" y="703" font-family="Liberation Mono" font-size="18.2" letter-spacing="0.400" fill="#101010"  xml:space="preserve">Image</text>
<text x="746" y="688.8" font-family="Liberation Mono" font-size="18.2" letter-spacing="0.800" fill="#0a1d52" stroke-width="0.35" stroke="#0a1d52" xml:space="preserve">Save</text>
<circle cx="12.2" cy="636" r="9.5" fill="#e81010"/>
<text x="12.2" y="642" text-anchor="middle" font-family="Liberation Sans" font-weight="bold" font-size="16.5" fill="#000">1</text>
<circle cx="12" cy="659.7" r="9.3" fill="#e6e61e"/>
<text x="12" y="665.7" text-anchor="middle" font-family="Liberation Sans" font-weight="bold" font-size="16.5" fill="#000">2</text>
<circle cx="11.5" cy="684.2" r="9.7" fill="#e6e61e"/>
<text x="11.5" y="690.2" text-anchor="middle" font-family="Liberation Sans" font-weight="bold" font-size="16.5" fill="#000">2</text>
<circle cx="11.5" cy="706.7" r="9.8" fill="#e6e61e"/>
<text x="11.5" y="712.7" text-anchor="middle" font-family="Liberation Sans" font-weight="bold" font-size="16.5" fill="#000">2</text>
<circle cx="202" cy="684" r="9.7" fill="#e6e61e"/>
<text x="202" y="690" text-anchor="middle" font-family="Liberation Sans" font-weight="bold" font-size="16.5" fill="#000">2</text>
<circle cx="202" cy="706.6" r="9.6" fill="#e6e61e"/>
<text x="202" y="712.6" text-anchor="middle" font-family="Liberation Sans" font-weight="bold" font-size="16.5" fill="#000">2</text>
<circle cx="811.3" cy="634.4" r="9.3" fill="#e6e61e"/>
<text x="811.3" y="640.4" text-anchor="middle" font-family="Liberation Sans" font-weight="bold" font-size="16" fill="#000">2</text>
<text x="21" y="643.5" font-family="Liberation Mono" font-size="18.2" letter-spacing="0.900" fill="#e01c1c" stroke="#000" stroke-width="0.45"  xml:space="preserve">5V-</text>
<text x="127" y="643" font-family="Liberation Mono" font-size="18.2" letter-spacing="0.900" fill="#e01c1c" stroke="#000" stroke-width="0.45"  xml:space="preserve">0.00div</text>
<text x="21" y="667.2" font-family="Liberation Mono" font-size="18.2" letter-spacing="0.900" fill="#eaea40" stroke="#000" stroke-width="0.45"  xml:space="preserve">2V-</text>
<text x="127" y="667" font-family="Liberation Mono" font-size="18.2" letter-spacing="0.900" fill="#eaea40" stroke="#000" stroke-width="0.45"  xml:space="preserve">0.04div</text>
<text x="262" y="641" font-family="Liberation Mono" font-size="18.2" letter-spacing="1.000" fill="#f2f2f2" stroke="#000" stroke-width="0.45"  xml:space="preserve">(2.5KS/s)</text>
<text x="261" y="665" font-family="Liberation Mono" font-size="18.2" letter-spacing="1.000" fill="#f2f2f2" stroke="#000" stroke-width="0.45"  xml:space="preserve">Depth:10K</text>
<text x="25" y="690" font-family="Liberation Mono" font-size="18.2" letter-spacing="1.000" fill="#eaea40" stroke="#000" stroke-width="0.45"  xml:space="preserve">F:  ?</text>
<text x="25" y="712.5" font-family="Liberation Mono" font-size="18.2" letter-spacing="1.000" fill="#eaea40" stroke="#000" stroke-width="0.45"  xml:space="preserve">+D:46.8%</text>
<text x="217" y="690" font-family="Liberation Mono" font-size="18.2" letter-spacing="1.000" fill="#eaea40" stroke="#000" stroke-width="0.45"  xml:space="preserve">Vk:4.616v</text>
<text x="217" y="712.9" font-family="Liberation Mono" font-size="18.2" letter-spacing="1.000" fill="#eaea40" stroke="#000" stroke-width="0.45"  xml:space="preserve">V:-3.379v</text>
<text x="399" y="640.8" font-family="Liberation Mono" font-size="17" letter-spacing="1.300" fill="#f2f2f2" stroke="#000" stroke-width="0.45"  xml:space="preserve">M:200ms</text>
<path d="M822.7 641.6 H831.5 L837 627 H845" fill="none" stroke="#e8e8e8" stroke-width="1.2"/>
<text x="848.5" y="641.9" font-family="Liberation Mono" font-size="17.5" letter-spacing="0.800" fill="#f2f2f2" stroke="#000" stroke-width="0.45"  xml:space="preserve">0.00mV</text>
</svg>
</body></html>
